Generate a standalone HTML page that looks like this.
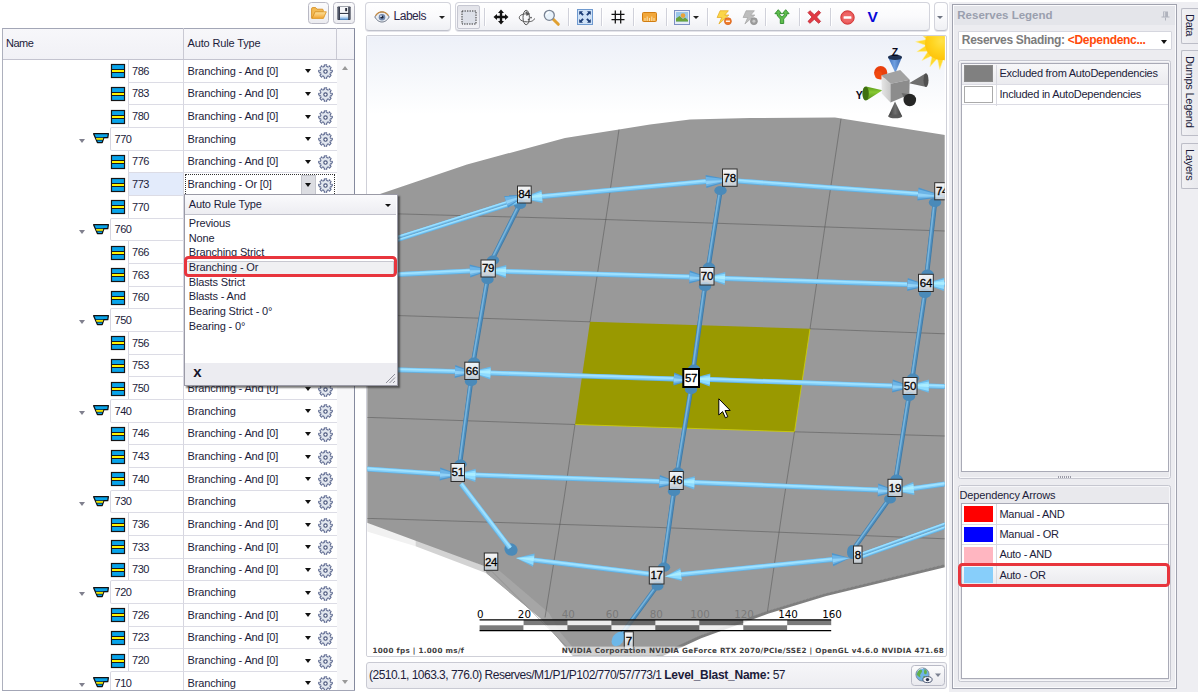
<!DOCTYPE html>
<html lang="en"><head><meta charset="utf-8"><title>Reserves</title>
<style>
*,*:before,*:after{box-sizing:border-box;margin:0;padding:0}
html,body{width:1200px;height:693px;overflow:hidden;background:#fff}
body{position:relative;font-family:"Liberation Sans",sans-serif;font-size:11px;color:#1c1c3a}
.t{position:absolute;white-space:nowrap;line-height:13px;font-size:11px;letter-spacing:-0.15px;color:#1c1c3a}
.t.b{font-weight:bold}
.ic{position:absolute;overflow:visible}
.vl{position:absolute;width:1px}
.tri{position:absolute;width:0;height:0;border-style:solid}
/* tree */
#tree{position:absolute;left:0;top:0;width:360px;height:693px}
#tree:before{content:"";position:absolute;left:2px;top:28px;width:353px;height:663px;border:1px solid #a3a6b6;border-right-color:#858a9e;border-left-color:#adb0bd;background:#fff}
.thead{position:absolute;left:3px;top:29px;width:351px;height:30.9px;background:linear-gradient(#f7f7fa,#f1f1f6);border-bottom:1px solid #c3c3cf}
.sbcol{position:absolute;left:336px;top:60px;width:18px;height:630px;background:#f7f7f9;border-left:1px solid #d4d4dc}
.cell{position:absolute;border-left:1px solid #d6d6e0;border-bottom:1px solid #dcdce5;background:#fff}
.cell.selc{background:#e3ebfb}
.cell.gc{border-top:1px solid #dcdce5;border-radius:2px 0 0 2px}
.focus{position:absolute;border:1px dotted #333}
.ddbtn{position:absolute;background:#dcdde2;border:1px solid #c4c5cc}
/* popup */
#pop{position:absolute;left:184px;top:194px;width:213.5px;height:192px;background:#fff;border:1px solid #9a9aa6;box-shadow:2px 2px 1.5px rgba(40,40,40,.6)}
.pophd{position:absolute;left:0;top:0;width:211px;height:20px;background:linear-gradient(#fafafc,#ededf2);border-bottom:1px solid #c2c2cc}
.popft{position:absolute;left:0;top:168px;width:211.5px;height:22px;background:#ececf1}
.hl{position:absolute;background:#f0f0f2;border:1px solid #c8c8d0}
.redbox{position:absolute;border:3px solid #e8353d;border-radius:4.5px}
/* toolbars */
.sbtn{position:absolute;border:1px solid #b9b9c4;border-radius:3.5px;background:linear-gradient(#fbfbfc,#ececf0)}
.tbar{position:absolute;border:1px solid #d3d4dc;border-bottom-color:#bfc1cb;border-radius:4px;background:linear-gradient(#ffffff 0%,#fafafc 50%,#eff0f4 100%);box-shadow:0 1px 0 #e4e4ea}
.tsep{position:absolute;top:8px;width:1px;height:18px;background:#d0d1da;box-shadow:1px 0 0 #fff}
.tchk{position:absolute;border:1px solid #c6c7d1;border-radius:2px;background:linear-gradient(#e2e3e9,#f2f2f6)}
/* viewport */
#vframe{position:absolute;left:366px;top:35px;width:581px;height:622px;border:1px solid #cfd0d8;border-radius:2px;background:#fff}
#view{position:absolute;left:0;top:0}
.lbl{font:11.5px "Liberation Sans",sans-serif;fill:#000;stroke:#000;stroke-width:0.3px;letter-spacing:-0.2px}
.sc{font:10.3px "DejaVu Sans","Liberation Sans",sans-serif}
.tiny{font:bold 7.2px "DejaVu Sans","Liberation Sans",sans-serif;fill:#404040;letter-spacing:0.3px}
.ax{font:bold 10.5px "Liberation Sans",sans-serif;fill:#0a0a1a}
#status{position:absolute;left:366px;top:662px;width:581px;height:27px;border:1px solid #c9cad3;border-radius:3px;background:linear-gradient(#f6f6f9,#ededf1)}
#status .t{font-size:12px;top:6px;left:2px;letter-spacing:-0.52px}
#status .t b{letter-spacing:-0.26px}
.gbtn{position:absolute;left:911px;top:664.5px;width:33.5px;height:21.5px;border:1px solid #b9bac6;border-radius:3.5px;background:linear-gradient(#fcfcfd,#e9e9ee)}
/* right */
#rbg{position:absolute;left:949px;top:2px;width:249px;height:690px;background:#eeeef2}
#rp{position:absolute;left:951.5px;top:4px;width:225.5px;height:685px;border:1px solid #a0a2ae;background:#ececf0;box-shadow:inset 0 0 0 1px #fbfbfd}
.rptitle{position:absolute;left:1px;top:1px;width:221.5px;height:18.5px;background:#e4e5ea}
.combo{position:absolute;left:5px;top:26px;width:214px;height:19px;background:#fff;border:1px solid #d5d6de;border-radius:1px}
.lbox{position:absolute;border:1px solid #c6c7d0;border-radius:2.5px;background:#e9e9ed;box-shadow:inset 0 0 0 1px #f6f6f9}
.linner{position:absolute;left:2px;top:2px;width:208px;height:408.5px;background:#fff;border:1px solid #a9aab6}
/*L2*/.linner2{position:absolute;left:8px;top:498.3px;width:208px;height:175.7px;background:#fff;border:1px solid #a9aab6}
.lrow{position:absolute;border-bottom:1px solid #dcdce4}
.lrow.sel{background:linear-gradient(#f7f7f9,#ebebef)}
.sw{position:absolute;border:1px solid #999}
.dots{position:absolute;width:14px;height:2px;background:repeating-linear-gradient(90deg,#9a9aa6 0 1px,transparent 1px 2px)}
.stab{position:absolute;left:1181px;width:17px;border:1px solid #bcbdc7;border-right:none;border-radius:2px 0 0 2px;background:linear-gradient(90deg,#f1f1f4,#e9e9ed)}
.stab span{position:absolute;left:13.8px;top:5px;white-space:nowrap;font-size:11px;color:#1c1c3a;transform-origin:0 0;transform:rotate(90deg);line-height:13px;letter-spacing:-0.25px}
</style></head>
<body>
<div id="tree">
<div class="thead"></div>
<div class="vl" style="left:183px;top:28px;height:31px;background:#c9c9d3"></div>
<div class="vl" style="left:336px;top:28px;height:31px;background:#c9c9d3"></div>
<div class="t hd" style="left:6px;top:37.2px;letter-spacing:-0.5px">Name</div>
<div class="t hd" style="left:187.5px;top:37.2px">Auto Rule Type</div>
<div class="sbcol"></div>
<div class="tri" style="left:342px;top:65.8px;border-width:0 3.5px 4px 3.5px;border-color:transparent transparent #9a9a9a transparent"></div>
<div class="tri" style="left:342px;top:680px;border-width:4px 3.5px 0 3.5px;border-color:#9a9a9a transparent transparent transparent"></div>
<div class="cell" style="left:127.5px;top:59.90px;width:55.5px;height:22.67px"></div>
<svg class="ic" style="left:111px;top:64.40px" width="14" height="14" viewBox="0 0 14 14"><rect x="0.5" y="0.5" width="13" height="13" fill="#08a4ea" stroke="#151515" stroke-width="1.2"/><rect x="1" y="5" width="12" height="1" fill="#1a1a1a"/><rect x="1" y="6" width="12" height="2" fill="#fff200"/><rect x="1" y="8" width="12" height="1" fill="#1a1a1a"/></svg>
<div class="cell" style="left:183px;top:59.90px;width:153.5px;height:22.67px"></div>
<div class="t" style="left:132px;top:64.50px;letter-spacing:-0.45px">786</div>
<div class="t" style="left:187.5px;top:64.50px">Branching - And [0]</div>
<div class="tri" style="left:304.5px;top:69.40px;border-width:4px 3.5px 0 3.5px;border-color:#111 transparent transparent transparent"></div>
<svg class="ic" style="left:318px;top:64.20px" width="15" height="15" viewBox="0 0 15 15"><path d="M6.15 2.58L6.36 0.80L8.64 0.80L8.85 2.58L10.03 3.07L11.43 1.95L13.05 3.57L11.93 4.97L12.42 6.15L14.20 6.36L14.20 8.64L12.42 8.85L11.93 10.03L13.05 11.43L11.43 13.05L10.03 11.93L8.85 12.42L8.64 14.20L6.36 14.20L6.15 12.42L4.97 11.93L3.57 13.05L1.95 11.43L3.07 10.03L2.58 8.85L0.80 8.64L0.80 6.36L2.58 6.15L3.07 4.97L1.95 3.57L3.57 1.95L4.97 3.07Z" fill="#e2e7ef" stroke="#56628a" stroke-width="1.15" stroke-linejoin="round" stroke-dasharray="2.2 0.45"/><circle cx="7.5" cy="7.5" r="1.7" fill="#fff" stroke="#4a567c" stroke-width="1.15"/></svg>
<div class="cell" style="left:127.5px;top:82.57px;width:55.5px;height:22.67px"></div>
<svg class="ic" style="left:111px;top:87.07px" width="14" height="14" viewBox="0 0 14 14"><rect x="0.5" y="0.5" width="13" height="13" fill="#08a4ea" stroke="#151515" stroke-width="1.2"/><rect x="1" y="5" width="12" height="1" fill="#1a1a1a"/><rect x="1" y="6" width="12" height="2" fill="#fff200"/><rect x="1" y="8" width="12" height="1" fill="#1a1a1a"/></svg>
<div class="cell" style="left:183px;top:82.57px;width:153.5px;height:22.67px"></div>
<div class="t" style="left:132px;top:87.17px;letter-spacing:-0.45px">783</div>
<div class="t" style="left:187.5px;top:87.17px">Branching - And [0]</div>
<div class="tri" style="left:304.5px;top:92.07px;border-width:4px 3.5px 0 3.5px;border-color:#111 transparent transparent transparent"></div>
<svg class="ic" style="left:318px;top:86.87px" width="15" height="15" viewBox="0 0 15 15"><path d="M6.15 2.58L6.36 0.80L8.64 0.80L8.85 2.58L10.03 3.07L11.43 1.95L13.05 3.57L11.93 4.97L12.42 6.15L14.20 6.36L14.20 8.64L12.42 8.85L11.93 10.03L13.05 11.43L11.43 13.05L10.03 11.93L8.85 12.42L8.64 14.20L6.36 14.20L6.15 12.42L4.97 11.93L3.57 13.05L1.95 11.43L3.07 10.03L2.58 8.85L0.80 8.64L0.80 6.36L2.58 6.15L3.07 4.97L1.95 3.57L3.57 1.95L4.97 3.07Z" fill="#e2e7ef" stroke="#56628a" stroke-width="1.15" stroke-linejoin="round" stroke-dasharray="2.2 0.45"/><circle cx="7.5" cy="7.5" r="1.7" fill="#fff" stroke="#4a567c" stroke-width="1.15"/></svg>
<div class="cell" style="left:127.5px;top:105.23px;width:55.5px;height:22.67px"></div>
<svg class="ic" style="left:111px;top:109.73px" width="14" height="14" viewBox="0 0 14 14"><rect x="0.5" y="0.5" width="13" height="13" fill="#08a4ea" stroke="#151515" stroke-width="1.2"/><rect x="1" y="5" width="12" height="1" fill="#1a1a1a"/><rect x="1" y="6" width="12" height="2" fill="#fff200"/><rect x="1" y="8" width="12" height="1" fill="#1a1a1a"/></svg>
<div class="cell" style="left:183px;top:105.23px;width:153.5px;height:22.67px"></div>
<div class="t" style="left:132px;top:109.83px;letter-spacing:-0.45px">780</div>
<div class="t" style="left:187.5px;top:109.83px">Branching - And [0]</div>
<div class="tri" style="left:304.5px;top:114.73px;border-width:4px 3.5px 0 3.5px;border-color:#111 transparent transparent transparent"></div>
<svg class="ic" style="left:318px;top:109.53px" width="15" height="15" viewBox="0 0 15 15"><path d="M6.15 2.58L6.36 0.80L8.64 0.80L8.85 2.58L10.03 3.07L11.43 1.95L13.05 3.57L11.93 4.97L12.42 6.15L14.20 6.36L14.20 8.64L12.42 8.85L11.93 10.03L13.05 11.43L11.43 13.05L10.03 11.93L8.85 12.42L8.64 14.20L6.36 14.20L6.15 12.42L4.97 11.93L3.57 13.05L1.95 11.43L3.07 10.03L2.58 8.85L0.80 8.64L0.80 6.36L2.58 6.15L3.07 4.97L1.95 3.57L3.57 1.95L4.97 3.07Z" fill="#e2e7ef" stroke="#56628a" stroke-width="1.15" stroke-linejoin="round" stroke-dasharray="2.2 0.45"/><circle cx="7.5" cy="7.5" r="1.7" fill="#fff" stroke="#4a567c" stroke-width="1.15"/></svg>
<div class="cell gc" style="left:110px;top:126.90px;width:73px;height:23.67px"></div>
<div class="tri" style="left:79px;top:138.90px;border-width:4px 3.4px 0 3.4px;border-color:#80808e transparent transparent transparent"></div>
<svg class="ic" style="left:92.6px;top:133.40px" width="16" height="11" viewBox="0 0 16 11"><path d="M0.6 0.7H15.4L14.8 4.6H10.9L9.2 9.5H4.4Z" fill="#08a4ea" stroke="#111" stroke-width="1.25" stroke-linejoin="round"/><path d="M2.9 4.9H10.3L9.6 7H3.8Z" fill="#fff200"/><path d="M2.4 4.6H14M3.7 7.2H9.8" stroke="#111" stroke-width="0.7" fill="none"/></svg>
<div class="cell" style="left:183px;top:127.90px;width:153.5px;height:22.67px"></div>
<div class="t" style="left:114.5px;top:132.50px;letter-spacing:-0.45px">770</div>
<div class="t" style="left:187.5px;top:132.50px">Branching</div>
<div class="tri" style="left:304.5px;top:137.40px;border-width:4px 3.5px 0 3.5px;border-color:#111 transparent transparent transparent"></div>
<svg class="ic" style="left:318px;top:132.20px" width="15" height="15" viewBox="0 0 15 15"><path d="M6.15 2.58L6.36 0.80L8.64 0.80L8.85 2.58L10.03 3.07L11.43 1.95L13.05 3.57L11.93 4.97L12.42 6.15L14.20 6.36L14.20 8.64L12.42 8.85L11.93 10.03L13.05 11.43L11.43 13.05L10.03 11.93L8.85 12.42L8.64 14.20L6.36 14.20L6.15 12.42L4.97 11.93L3.57 13.05L1.95 11.43L3.07 10.03L2.58 8.85L0.80 8.64L0.80 6.36L2.58 6.15L3.07 4.97L1.95 3.57L3.57 1.95L4.97 3.07Z" fill="#e2e7ef" stroke="#56628a" stroke-width="1.15" stroke-linejoin="round" stroke-dasharray="2.2 0.45"/><circle cx="7.5" cy="7.5" r="1.7" fill="#fff" stroke="#4a567c" stroke-width="1.15"/></svg>
<div class="cell" style="left:127.5px;top:150.57px;width:55.5px;height:22.67px"></div>
<svg class="ic" style="left:111px;top:155.07px" width="14" height="14" viewBox="0 0 14 14"><rect x="0.5" y="0.5" width="13" height="13" fill="#08a4ea" stroke="#151515" stroke-width="1.2"/><rect x="1" y="5" width="12" height="1" fill="#1a1a1a"/><rect x="1" y="6" width="12" height="2" fill="#fff200"/><rect x="1" y="8" width="12" height="1" fill="#1a1a1a"/></svg>
<div class="cell" style="left:183px;top:150.57px;width:153.5px;height:22.67px"></div>
<div class="t" style="left:132px;top:155.17px;letter-spacing:-0.45px">776</div>
<div class="t" style="left:187.5px;top:155.17px">Branching - And [0]</div>
<div class="tri" style="left:304.5px;top:160.07px;border-width:4px 3.5px 0 3.5px;border-color:#111 transparent transparent transparent"></div>
<svg class="ic" style="left:318px;top:154.87px" width="15" height="15" viewBox="0 0 15 15"><path d="M6.15 2.58L6.36 0.80L8.64 0.80L8.85 2.58L10.03 3.07L11.43 1.95L13.05 3.57L11.93 4.97L12.42 6.15L14.20 6.36L14.20 8.64L12.42 8.85L11.93 10.03L13.05 11.43L11.43 13.05L10.03 11.93L8.85 12.42L8.64 14.20L6.36 14.20L6.15 12.42L4.97 11.93L3.57 13.05L1.95 11.43L3.07 10.03L2.58 8.85L0.80 8.64L0.80 6.36L2.58 6.15L3.07 4.97L1.95 3.57L3.57 1.95L4.97 3.07Z" fill="#e2e7ef" stroke="#56628a" stroke-width="1.15" stroke-linejoin="round" stroke-dasharray="2.2 0.45"/><circle cx="7.5" cy="7.5" r="1.7" fill="#fff" stroke="#4a567c" stroke-width="1.15"/></svg>
<div class="cell selc" style="left:127.5px;top:173.24px;width:55.5px;height:22.67px"></div>
<svg class="ic" style="left:111px;top:177.74px" width="14" height="14" viewBox="0 0 14 14"><rect x="0.5" y="0.5" width="13" height="13" fill="#08a4ea" stroke="#151515" stroke-width="1.2"/><rect x="1" y="5" width="12" height="1" fill="#1a1a1a"/><rect x="1" y="6" width="12" height="2" fill="#fff200"/><rect x="1" y="8" width="12" height="1" fill="#1a1a1a"/></svg>
<div class="cell" style="left:183px;top:173.24px;width:153.5px;height:22.67px"></div>
<div class="t" style="left:132px;top:177.84px;letter-spacing:-0.45px">773</div>
<div class="t" style="left:187.5px;top:177.84px">Branching - Or [0]</div>
<div class="focus" style="left:184.5px;top:174.24px;width:150px;height:21.67px"></div>
<div class="ddbtn" style="left:300.5px;top:174.74px;width:15px;height:20.17px"></div>
<div class="tri" style="left:304.5px;top:182.74px;border-width:4px 3.5px 0 3.5px;border-color:#111 transparent transparent transparent"></div>
<svg class="ic" style="left:318px;top:177.54px" width="15" height="15" viewBox="0 0 15 15"><path d="M6.15 2.58L6.36 0.80L8.64 0.80L8.85 2.58L10.03 3.07L11.43 1.95L13.05 3.57L11.93 4.97L12.42 6.15L14.20 6.36L14.20 8.64L12.42 8.85L11.93 10.03L13.05 11.43L11.43 13.05L10.03 11.93L8.85 12.42L8.64 14.20L6.36 14.20L6.15 12.42L4.97 11.93L3.57 13.05L1.95 11.43L3.07 10.03L2.58 8.85L0.80 8.64L0.80 6.36L2.58 6.15L3.07 4.97L1.95 3.57L3.57 1.95L4.97 3.07Z" fill="#e2e7ef" stroke="#56628a" stroke-width="1.15" stroke-linejoin="round" stroke-dasharray="2.2 0.45"/><circle cx="7.5" cy="7.5" r="1.7" fill="#fff" stroke="#4a567c" stroke-width="1.15"/></svg>
<div class="cell" style="left:127.5px;top:195.90px;width:55.5px;height:22.67px"></div>
<svg class="ic" style="left:111px;top:200.40px" width="14" height="14" viewBox="0 0 14 14"><rect x="0.5" y="0.5" width="13" height="13" fill="#08a4ea" stroke="#151515" stroke-width="1.2"/><rect x="1" y="5" width="12" height="1" fill="#1a1a1a"/><rect x="1" y="6" width="12" height="2" fill="#fff200"/><rect x="1" y="8" width="12" height="1" fill="#1a1a1a"/></svg>
<div class="cell" style="left:183px;top:195.90px;width:153.5px;height:22.67px"></div>
<div class="t" style="left:132px;top:200.50px;letter-spacing:-0.45px">770</div>
<div class="t" style="left:187.5px;top:200.50px">Branching - And [0]</div>
<div class="tri" style="left:304.5px;top:205.40px;border-width:4px 3.5px 0 3.5px;border-color:#111 transparent transparent transparent"></div>
<svg class="ic" style="left:318px;top:200.20px" width="15" height="15" viewBox="0 0 15 15"><path d="M6.15 2.58L6.36 0.80L8.64 0.80L8.85 2.58L10.03 3.07L11.43 1.95L13.05 3.57L11.93 4.97L12.42 6.15L14.20 6.36L14.20 8.64L12.42 8.85L11.93 10.03L13.05 11.43L11.43 13.05L10.03 11.93L8.85 12.42L8.64 14.20L6.36 14.20L6.15 12.42L4.97 11.93L3.57 13.05L1.95 11.43L3.07 10.03L2.58 8.85L0.80 8.64L0.80 6.36L2.58 6.15L3.07 4.97L1.95 3.57L3.57 1.95L4.97 3.07Z" fill="#e2e7ef" stroke="#56628a" stroke-width="1.15" stroke-linejoin="round" stroke-dasharray="2.2 0.45"/><circle cx="7.5" cy="7.5" r="1.7" fill="#fff" stroke="#4a567c" stroke-width="1.15"/></svg>
<div class="cell gc" style="left:110px;top:217.57px;width:73px;height:23.67px"></div>
<div class="tri" style="left:79px;top:229.57px;border-width:4px 3.4px 0 3.4px;border-color:#80808e transparent transparent transparent"></div>
<svg class="ic" style="left:92.6px;top:224.07px" width="16" height="11" viewBox="0 0 16 11"><path d="M0.6 0.7H15.4L14.8 4.6H10.9L9.2 9.5H4.4Z" fill="#08a4ea" stroke="#111" stroke-width="1.25" stroke-linejoin="round"/><path d="M2.9 4.9H10.3L9.6 7H3.8Z" fill="#fff200"/><path d="M2.4 4.6H14M3.7 7.2H9.8" stroke="#111" stroke-width="0.7" fill="none"/></svg>
<div class="cell" style="left:183px;top:218.57px;width:153.5px;height:22.67px"></div>
<div class="t" style="left:114.5px;top:223.17px;letter-spacing:-0.45px">760</div>
<div class="t" style="left:187.5px;top:223.17px">Branching</div>
<div class="tri" style="left:304.5px;top:228.07px;border-width:4px 3.5px 0 3.5px;border-color:#111 transparent transparent transparent"></div>
<svg class="ic" style="left:318px;top:222.87px" width="15" height="15" viewBox="0 0 15 15"><path d="M6.15 2.58L6.36 0.80L8.64 0.80L8.85 2.58L10.03 3.07L11.43 1.95L13.05 3.57L11.93 4.97L12.42 6.15L14.20 6.36L14.20 8.64L12.42 8.85L11.93 10.03L13.05 11.43L11.43 13.05L10.03 11.93L8.85 12.42L8.64 14.20L6.36 14.20L6.15 12.42L4.97 11.93L3.57 13.05L1.95 11.43L3.07 10.03L2.58 8.85L0.80 8.64L0.80 6.36L2.58 6.15L3.07 4.97L1.95 3.57L3.57 1.95L4.97 3.07Z" fill="#e2e7ef" stroke="#56628a" stroke-width="1.15" stroke-linejoin="round" stroke-dasharray="2.2 0.45"/><circle cx="7.5" cy="7.5" r="1.7" fill="#fff" stroke="#4a567c" stroke-width="1.15"/></svg>
<div class="cell" style="left:127.5px;top:241.24px;width:55.5px;height:22.67px"></div>
<svg class="ic" style="left:111px;top:245.74px" width="14" height="14" viewBox="0 0 14 14"><rect x="0.5" y="0.5" width="13" height="13" fill="#08a4ea" stroke="#151515" stroke-width="1.2"/><rect x="1" y="5" width="12" height="1" fill="#1a1a1a"/><rect x="1" y="6" width="12" height="2" fill="#fff200"/><rect x="1" y="8" width="12" height="1" fill="#1a1a1a"/></svg>
<div class="cell" style="left:183px;top:241.24px;width:153.5px;height:22.67px"></div>
<div class="t" style="left:132px;top:245.84px;letter-spacing:-0.45px">766</div>
<div class="t" style="left:187.5px;top:245.84px">Branching - And [0]</div>
<div class="tri" style="left:304.5px;top:250.74px;border-width:4px 3.5px 0 3.5px;border-color:#111 transparent transparent transparent"></div>
<svg class="ic" style="left:318px;top:245.54px" width="15" height="15" viewBox="0 0 15 15"><path d="M6.15 2.58L6.36 0.80L8.64 0.80L8.85 2.58L10.03 3.07L11.43 1.95L13.05 3.57L11.93 4.97L12.42 6.15L14.20 6.36L14.20 8.64L12.42 8.85L11.93 10.03L13.05 11.43L11.43 13.05L10.03 11.93L8.85 12.42L8.64 14.20L6.36 14.20L6.15 12.42L4.97 11.93L3.57 13.05L1.95 11.43L3.07 10.03L2.58 8.85L0.80 8.64L0.80 6.36L2.58 6.15L3.07 4.97L1.95 3.57L3.57 1.95L4.97 3.07Z" fill="#e2e7ef" stroke="#56628a" stroke-width="1.15" stroke-linejoin="round" stroke-dasharray="2.2 0.45"/><circle cx="7.5" cy="7.5" r="1.7" fill="#fff" stroke="#4a567c" stroke-width="1.15"/></svg>
<div class="cell" style="left:127.5px;top:263.90px;width:55.5px;height:22.67px"></div>
<svg class="ic" style="left:111px;top:268.40px" width="14" height="14" viewBox="0 0 14 14"><rect x="0.5" y="0.5" width="13" height="13" fill="#08a4ea" stroke="#151515" stroke-width="1.2"/><rect x="1" y="5" width="12" height="1" fill="#1a1a1a"/><rect x="1" y="6" width="12" height="2" fill="#fff200"/><rect x="1" y="8" width="12" height="1" fill="#1a1a1a"/></svg>
<div class="cell" style="left:183px;top:263.90px;width:153.5px;height:22.67px"></div>
<div class="t" style="left:132px;top:268.50px;letter-spacing:-0.45px">763</div>
<div class="t" style="left:187.5px;top:268.50px">Branching - And [0]</div>
<div class="tri" style="left:304.5px;top:273.40px;border-width:4px 3.5px 0 3.5px;border-color:#111 transparent transparent transparent"></div>
<svg class="ic" style="left:318px;top:268.20px" width="15" height="15" viewBox="0 0 15 15"><path d="M6.15 2.58L6.36 0.80L8.64 0.80L8.85 2.58L10.03 3.07L11.43 1.95L13.05 3.57L11.93 4.97L12.42 6.15L14.20 6.36L14.20 8.64L12.42 8.85L11.93 10.03L13.05 11.43L11.43 13.05L10.03 11.93L8.85 12.42L8.64 14.20L6.36 14.20L6.15 12.42L4.97 11.93L3.57 13.05L1.95 11.43L3.07 10.03L2.58 8.85L0.80 8.64L0.80 6.36L2.58 6.15L3.07 4.97L1.95 3.57L3.57 1.95L4.97 3.07Z" fill="#e2e7ef" stroke="#56628a" stroke-width="1.15" stroke-linejoin="round" stroke-dasharray="2.2 0.45"/><circle cx="7.5" cy="7.5" r="1.7" fill="#fff" stroke="#4a567c" stroke-width="1.15"/></svg>
<div class="cell" style="left:127.5px;top:286.57px;width:55.5px;height:22.67px"></div>
<svg class="ic" style="left:111px;top:291.07px" width="14" height="14" viewBox="0 0 14 14"><rect x="0.5" y="0.5" width="13" height="13" fill="#08a4ea" stroke="#151515" stroke-width="1.2"/><rect x="1" y="5" width="12" height="1" fill="#1a1a1a"/><rect x="1" y="6" width="12" height="2" fill="#fff200"/><rect x="1" y="8" width="12" height="1" fill="#1a1a1a"/></svg>
<div class="cell" style="left:183px;top:286.57px;width:153.5px;height:22.67px"></div>
<div class="t" style="left:132px;top:291.17px;letter-spacing:-0.45px">760</div>
<div class="t" style="left:187.5px;top:291.17px">Branching - And [0]</div>
<div class="tri" style="left:304.5px;top:296.07px;border-width:4px 3.5px 0 3.5px;border-color:#111 transparent transparent transparent"></div>
<svg class="ic" style="left:318px;top:290.87px" width="15" height="15" viewBox="0 0 15 15"><path d="M6.15 2.58L6.36 0.80L8.64 0.80L8.85 2.58L10.03 3.07L11.43 1.95L13.05 3.57L11.93 4.97L12.42 6.15L14.20 6.36L14.20 8.64L12.42 8.85L11.93 10.03L13.05 11.43L11.43 13.05L10.03 11.93L8.85 12.42L8.64 14.20L6.36 14.20L6.15 12.42L4.97 11.93L3.57 13.05L1.95 11.43L3.07 10.03L2.58 8.85L0.80 8.64L0.80 6.36L2.58 6.15L3.07 4.97L1.95 3.57L3.57 1.95L4.97 3.07Z" fill="#e2e7ef" stroke="#56628a" stroke-width="1.15" stroke-linejoin="round" stroke-dasharray="2.2 0.45"/><circle cx="7.5" cy="7.5" r="1.7" fill="#fff" stroke="#4a567c" stroke-width="1.15"/></svg>
<div class="cell gc" style="left:110px;top:308.24px;width:73px;height:23.67px"></div>
<div class="tri" style="left:79px;top:320.24px;border-width:4px 3.4px 0 3.4px;border-color:#80808e transparent transparent transparent"></div>
<svg class="ic" style="left:92.6px;top:314.74px" width="16" height="11" viewBox="0 0 16 11"><path d="M0.6 0.7H15.4L14.8 4.6H10.9L9.2 9.5H4.4Z" fill="#08a4ea" stroke="#111" stroke-width="1.25" stroke-linejoin="round"/><path d="M2.9 4.9H10.3L9.6 7H3.8Z" fill="#fff200"/><path d="M2.4 4.6H14M3.7 7.2H9.8" stroke="#111" stroke-width="0.7" fill="none"/></svg>
<div class="cell" style="left:183px;top:309.24px;width:153.5px;height:22.67px"></div>
<div class="t" style="left:114.5px;top:313.84px;letter-spacing:-0.45px">750</div>
<div class="t" style="left:187.5px;top:313.84px">Branching</div>
<div class="tri" style="left:304.5px;top:318.74px;border-width:4px 3.5px 0 3.5px;border-color:#111 transparent transparent transparent"></div>
<svg class="ic" style="left:318px;top:313.54px" width="15" height="15" viewBox="0 0 15 15"><path d="M6.15 2.58L6.36 0.80L8.64 0.80L8.85 2.58L10.03 3.07L11.43 1.95L13.05 3.57L11.93 4.97L12.42 6.15L14.20 6.36L14.20 8.64L12.42 8.85L11.93 10.03L13.05 11.43L11.43 13.05L10.03 11.93L8.85 12.42L8.64 14.20L6.36 14.20L6.15 12.42L4.97 11.93L3.57 13.05L1.95 11.43L3.07 10.03L2.58 8.85L0.80 8.64L0.80 6.36L2.58 6.15L3.07 4.97L1.95 3.57L3.57 1.95L4.97 3.07Z" fill="#e2e7ef" stroke="#56628a" stroke-width="1.15" stroke-linejoin="round" stroke-dasharray="2.2 0.45"/><circle cx="7.5" cy="7.5" r="1.7" fill="#fff" stroke="#4a567c" stroke-width="1.15"/></svg>
<div class="cell" style="left:127.5px;top:331.90px;width:55.5px;height:22.67px"></div>
<svg class="ic" style="left:111px;top:336.40px" width="14" height="14" viewBox="0 0 14 14"><rect x="0.5" y="0.5" width="13" height="13" fill="#08a4ea" stroke="#151515" stroke-width="1.2"/><rect x="1" y="5" width="12" height="1" fill="#1a1a1a"/><rect x="1" y="6" width="12" height="2" fill="#fff200"/><rect x="1" y="8" width="12" height="1" fill="#1a1a1a"/></svg>
<div class="cell" style="left:183px;top:331.90px;width:153.5px;height:22.67px"></div>
<div class="t" style="left:132px;top:336.50px;letter-spacing:-0.45px">756</div>
<div class="t" style="left:187.5px;top:336.50px">Branching - And [0]</div>
<div class="tri" style="left:304.5px;top:341.40px;border-width:4px 3.5px 0 3.5px;border-color:#111 transparent transparent transparent"></div>
<svg class="ic" style="left:318px;top:336.20px" width="15" height="15" viewBox="0 0 15 15"><path d="M6.15 2.58L6.36 0.80L8.64 0.80L8.85 2.58L10.03 3.07L11.43 1.95L13.05 3.57L11.93 4.97L12.42 6.15L14.20 6.36L14.20 8.64L12.42 8.85L11.93 10.03L13.05 11.43L11.43 13.05L10.03 11.93L8.85 12.42L8.64 14.20L6.36 14.20L6.15 12.42L4.97 11.93L3.57 13.05L1.95 11.43L3.07 10.03L2.58 8.85L0.80 8.64L0.80 6.36L2.58 6.15L3.07 4.97L1.95 3.57L3.57 1.95L4.97 3.07Z" fill="#e2e7ef" stroke="#56628a" stroke-width="1.15" stroke-linejoin="round" stroke-dasharray="2.2 0.45"/><circle cx="7.5" cy="7.5" r="1.7" fill="#fff" stroke="#4a567c" stroke-width="1.15"/></svg>
<div class="cell" style="left:127.5px;top:354.57px;width:55.5px;height:22.67px"></div>
<svg class="ic" style="left:111px;top:359.07px" width="14" height="14" viewBox="0 0 14 14"><rect x="0.5" y="0.5" width="13" height="13" fill="#08a4ea" stroke="#151515" stroke-width="1.2"/><rect x="1" y="5" width="12" height="1" fill="#1a1a1a"/><rect x="1" y="6" width="12" height="2" fill="#fff200"/><rect x="1" y="8" width="12" height="1" fill="#1a1a1a"/></svg>
<div class="cell" style="left:183px;top:354.57px;width:153.5px;height:22.67px"></div>
<div class="t" style="left:132px;top:359.17px;letter-spacing:-0.45px">753</div>
<div class="t" style="left:187.5px;top:359.17px">Branching - And [0]</div>
<div class="tri" style="left:304.5px;top:364.07px;border-width:4px 3.5px 0 3.5px;border-color:#111 transparent transparent transparent"></div>
<svg class="ic" style="left:318px;top:358.87px" width="15" height="15" viewBox="0 0 15 15"><path d="M6.15 2.58L6.36 0.80L8.64 0.80L8.85 2.58L10.03 3.07L11.43 1.95L13.05 3.57L11.93 4.97L12.42 6.15L14.20 6.36L14.20 8.64L12.42 8.85L11.93 10.03L13.05 11.43L11.43 13.05L10.03 11.93L8.85 12.42L8.64 14.20L6.36 14.20L6.15 12.42L4.97 11.93L3.57 13.05L1.95 11.43L3.07 10.03L2.58 8.85L0.80 8.64L0.80 6.36L2.58 6.15L3.07 4.97L1.95 3.57L3.57 1.95L4.97 3.07Z" fill="#e2e7ef" stroke="#56628a" stroke-width="1.15" stroke-linejoin="round" stroke-dasharray="2.2 0.45"/><circle cx="7.5" cy="7.5" r="1.7" fill="#fff" stroke="#4a567c" stroke-width="1.15"/></svg>
<div class="cell" style="left:127.5px;top:377.24px;width:55.5px;height:22.67px"></div>
<svg class="ic" style="left:111px;top:381.74px" width="14" height="14" viewBox="0 0 14 14"><rect x="0.5" y="0.5" width="13" height="13" fill="#08a4ea" stroke="#151515" stroke-width="1.2"/><rect x="1" y="5" width="12" height="1" fill="#1a1a1a"/><rect x="1" y="6" width="12" height="2" fill="#fff200"/><rect x="1" y="8" width="12" height="1" fill="#1a1a1a"/></svg>
<div class="cell" style="left:183px;top:377.24px;width:153.5px;height:22.67px"></div>
<div class="t" style="left:132px;top:381.84px;letter-spacing:-0.45px">750</div>
<div class="t" style="left:187.5px;top:381.84px">Branching - And [0]</div>
<div class="tri" style="left:304.5px;top:386.74px;border-width:4px 3.5px 0 3.5px;border-color:#111 transparent transparent transparent"></div>
<svg class="ic" style="left:318px;top:381.54px" width="15" height="15" viewBox="0 0 15 15"><path d="M6.15 2.58L6.36 0.80L8.64 0.80L8.85 2.58L10.03 3.07L11.43 1.95L13.05 3.57L11.93 4.97L12.42 6.15L14.20 6.36L14.20 8.64L12.42 8.85L11.93 10.03L13.05 11.43L11.43 13.05L10.03 11.93L8.85 12.42L8.64 14.20L6.36 14.20L6.15 12.42L4.97 11.93L3.57 13.05L1.95 11.43L3.07 10.03L2.58 8.85L0.80 8.64L0.80 6.36L2.58 6.15L3.07 4.97L1.95 3.57L3.57 1.95L4.97 3.07Z" fill="#e2e7ef" stroke="#56628a" stroke-width="1.15" stroke-linejoin="round" stroke-dasharray="2.2 0.45"/><circle cx="7.5" cy="7.5" r="1.7" fill="#fff" stroke="#4a567c" stroke-width="1.15"/></svg>
<div class="cell gc" style="left:110px;top:398.90px;width:73px;height:23.67px"></div>
<div class="tri" style="left:79px;top:410.90px;border-width:4px 3.4px 0 3.4px;border-color:#80808e transparent transparent transparent"></div>
<svg class="ic" style="left:92.6px;top:405.40px" width="16" height="11" viewBox="0 0 16 11"><path d="M0.6 0.7H15.4L14.8 4.6H10.9L9.2 9.5H4.4Z" fill="#08a4ea" stroke="#111" stroke-width="1.25" stroke-linejoin="round"/><path d="M2.9 4.9H10.3L9.6 7H3.8Z" fill="#fff200"/><path d="M2.4 4.6H14M3.7 7.2H9.8" stroke="#111" stroke-width="0.7" fill="none"/></svg>
<div class="cell" style="left:183px;top:399.90px;width:153.5px;height:22.67px"></div>
<div class="t" style="left:114.5px;top:404.50px;letter-spacing:-0.45px">740</div>
<div class="t" style="left:187.5px;top:404.50px">Branching</div>
<div class="tri" style="left:304.5px;top:409.40px;border-width:4px 3.5px 0 3.5px;border-color:#111 transparent transparent transparent"></div>
<svg class="ic" style="left:318px;top:404.20px" width="15" height="15" viewBox="0 0 15 15"><path d="M6.15 2.58L6.36 0.80L8.64 0.80L8.85 2.58L10.03 3.07L11.43 1.95L13.05 3.57L11.93 4.97L12.42 6.15L14.20 6.36L14.20 8.64L12.42 8.85L11.93 10.03L13.05 11.43L11.43 13.05L10.03 11.93L8.85 12.42L8.64 14.20L6.36 14.20L6.15 12.42L4.97 11.93L3.57 13.05L1.95 11.43L3.07 10.03L2.58 8.85L0.80 8.64L0.80 6.36L2.58 6.15L3.07 4.97L1.95 3.57L3.57 1.95L4.97 3.07Z" fill="#e2e7ef" stroke="#56628a" stroke-width="1.15" stroke-linejoin="round" stroke-dasharray="2.2 0.45"/><circle cx="7.5" cy="7.5" r="1.7" fill="#fff" stroke="#4a567c" stroke-width="1.15"/></svg>
<div class="cell" style="left:127.5px;top:422.57px;width:55.5px;height:22.67px"></div>
<svg class="ic" style="left:111px;top:427.07px" width="14" height="14" viewBox="0 0 14 14"><rect x="0.5" y="0.5" width="13" height="13" fill="#08a4ea" stroke="#151515" stroke-width="1.2"/><rect x="1" y="5" width="12" height="1" fill="#1a1a1a"/><rect x="1" y="6" width="12" height="2" fill="#fff200"/><rect x="1" y="8" width="12" height="1" fill="#1a1a1a"/></svg>
<div class="cell" style="left:183px;top:422.57px;width:153.5px;height:22.67px"></div>
<div class="t" style="left:132px;top:427.17px;letter-spacing:-0.45px">746</div>
<div class="t" style="left:187.5px;top:427.17px">Branching - And [0]</div>
<div class="tri" style="left:304.5px;top:432.07px;border-width:4px 3.5px 0 3.5px;border-color:#111 transparent transparent transparent"></div>
<svg class="ic" style="left:318px;top:426.87px" width="15" height="15" viewBox="0 0 15 15"><path d="M6.15 2.58L6.36 0.80L8.64 0.80L8.85 2.58L10.03 3.07L11.43 1.95L13.05 3.57L11.93 4.97L12.42 6.15L14.20 6.36L14.20 8.64L12.42 8.85L11.93 10.03L13.05 11.43L11.43 13.05L10.03 11.93L8.85 12.42L8.64 14.20L6.36 14.20L6.15 12.42L4.97 11.93L3.57 13.05L1.95 11.43L3.07 10.03L2.58 8.85L0.80 8.64L0.80 6.36L2.58 6.15L3.07 4.97L1.95 3.57L3.57 1.95L4.97 3.07Z" fill="#e2e7ef" stroke="#56628a" stroke-width="1.15" stroke-linejoin="round" stroke-dasharray="2.2 0.45"/><circle cx="7.5" cy="7.5" r="1.7" fill="#fff" stroke="#4a567c" stroke-width="1.15"/></svg>
<div class="cell" style="left:127.5px;top:445.24px;width:55.5px;height:22.67px"></div>
<svg class="ic" style="left:111px;top:449.74px" width="14" height="14" viewBox="0 0 14 14"><rect x="0.5" y="0.5" width="13" height="13" fill="#08a4ea" stroke="#151515" stroke-width="1.2"/><rect x="1" y="5" width="12" height="1" fill="#1a1a1a"/><rect x="1" y="6" width="12" height="2" fill="#fff200"/><rect x="1" y="8" width="12" height="1" fill="#1a1a1a"/></svg>
<div class="cell" style="left:183px;top:445.24px;width:153.5px;height:22.67px"></div>
<div class="t" style="left:132px;top:449.84px;letter-spacing:-0.45px">743</div>
<div class="t" style="left:187.5px;top:449.84px">Branching - And [0]</div>
<div class="tri" style="left:304.5px;top:454.74px;border-width:4px 3.5px 0 3.5px;border-color:#111 transparent transparent transparent"></div>
<svg class="ic" style="left:318px;top:449.54px" width="15" height="15" viewBox="0 0 15 15"><path d="M6.15 2.58L6.36 0.80L8.64 0.80L8.85 2.58L10.03 3.07L11.43 1.95L13.05 3.57L11.93 4.97L12.42 6.15L14.20 6.36L14.20 8.64L12.42 8.85L11.93 10.03L13.05 11.43L11.43 13.05L10.03 11.93L8.85 12.42L8.64 14.20L6.36 14.20L6.15 12.42L4.97 11.93L3.57 13.05L1.95 11.43L3.07 10.03L2.58 8.85L0.80 8.64L0.80 6.36L2.58 6.15L3.07 4.97L1.95 3.57L3.57 1.95L4.97 3.07Z" fill="#e2e7ef" stroke="#56628a" stroke-width="1.15" stroke-linejoin="round" stroke-dasharray="2.2 0.45"/><circle cx="7.5" cy="7.5" r="1.7" fill="#fff" stroke="#4a567c" stroke-width="1.15"/></svg>
<div class="cell" style="left:127.5px;top:467.91px;width:55.5px;height:22.67px"></div>
<svg class="ic" style="left:111px;top:472.41px" width="14" height="14" viewBox="0 0 14 14"><rect x="0.5" y="0.5" width="13" height="13" fill="#08a4ea" stroke="#151515" stroke-width="1.2"/><rect x="1" y="5" width="12" height="1" fill="#1a1a1a"/><rect x="1" y="6" width="12" height="2" fill="#fff200"/><rect x="1" y="8" width="12" height="1" fill="#1a1a1a"/></svg>
<div class="cell" style="left:183px;top:467.91px;width:153.5px;height:22.67px"></div>
<div class="t" style="left:132px;top:472.51px;letter-spacing:-0.45px">740</div>
<div class="t" style="left:187.5px;top:472.51px">Branching - And [0]</div>
<div class="tri" style="left:304.5px;top:477.41px;border-width:4px 3.5px 0 3.5px;border-color:#111 transparent transparent transparent"></div>
<svg class="ic" style="left:318px;top:472.21px" width="15" height="15" viewBox="0 0 15 15"><path d="M6.15 2.58L6.36 0.80L8.64 0.80L8.85 2.58L10.03 3.07L11.43 1.95L13.05 3.57L11.93 4.97L12.42 6.15L14.20 6.36L14.20 8.64L12.42 8.85L11.93 10.03L13.05 11.43L11.43 13.05L10.03 11.93L8.85 12.42L8.64 14.20L6.36 14.20L6.15 12.42L4.97 11.93L3.57 13.05L1.95 11.43L3.07 10.03L2.58 8.85L0.80 8.64L0.80 6.36L2.58 6.15L3.07 4.97L1.95 3.57L3.57 1.95L4.97 3.07Z" fill="#e2e7ef" stroke="#56628a" stroke-width="1.15" stroke-linejoin="round" stroke-dasharray="2.2 0.45"/><circle cx="7.5" cy="7.5" r="1.7" fill="#fff" stroke="#4a567c" stroke-width="1.15"/></svg>
<div class="cell gc" style="left:110px;top:489.57px;width:73px;height:23.67px"></div>
<div class="tri" style="left:79px;top:501.57px;border-width:4px 3.4px 0 3.4px;border-color:#80808e transparent transparent transparent"></div>
<svg class="ic" style="left:92.6px;top:496.07px" width="16" height="11" viewBox="0 0 16 11"><path d="M0.6 0.7H15.4L14.8 4.6H10.9L9.2 9.5H4.4Z" fill="#08a4ea" stroke="#111" stroke-width="1.25" stroke-linejoin="round"/><path d="M2.9 4.9H10.3L9.6 7H3.8Z" fill="#fff200"/><path d="M2.4 4.6H14M3.7 7.2H9.8" stroke="#111" stroke-width="0.7" fill="none"/></svg>
<div class="cell" style="left:183px;top:490.57px;width:153.5px;height:22.67px"></div>
<div class="t" style="left:114.5px;top:495.17px;letter-spacing:-0.45px">730</div>
<div class="t" style="left:187.5px;top:495.17px">Branching</div>
<div class="tri" style="left:304.5px;top:500.07px;border-width:4px 3.5px 0 3.5px;border-color:#111 transparent transparent transparent"></div>
<svg class="ic" style="left:318px;top:494.87px" width="15" height="15" viewBox="0 0 15 15"><path d="M6.15 2.58L6.36 0.80L8.64 0.80L8.85 2.58L10.03 3.07L11.43 1.95L13.05 3.57L11.93 4.97L12.42 6.15L14.20 6.36L14.20 8.64L12.42 8.85L11.93 10.03L13.05 11.43L11.43 13.05L10.03 11.93L8.85 12.42L8.64 14.20L6.36 14.20L6.15 12.42L4.97 11.93L3.57 13.05L1.95 11.43L3.07 10.03L2.58 8.85L0.80 8.64L0.80 6.36L2.58 6.15L3.07 4.97L1.95 3.57L3.57 1.95L4.97 3.07Z" fill="#e2e7ef" stroke="#56628a" stroke-width="1.15" stroke-linejoin="round" stroke-dasharray="2.2 0.45"/><circle cx="7.5" cy="7.5" r="1.7" fill="#fff" stroke="#4a567c" stroke-width="1.15"/></svg>
<div class="cell" style="left:127.5px;top:513.24px;width:55.5px;height:22.67px"></div>
<svg class="ic" style="left:111px;top:517.74px" width="14" height="14" viewBox="0 0 14 14"><rect x="0.5" y="0.5" width="13" height="13" fill="#08a4ea" stroke="#151515" stroke-width="1.2"/><rect x="1" y="5" width="12" height="1" fill="#1a1a1a"/><rect x="1" y="6" width="12" height="2" fill="#fff200"/><rect x="1" y="8" width="12" height="1" fill="#1a1a1a"/></svg>
<div class="cell" style="left:183px;top:513.24px;width:153.5px;height:22.67px"></div>
<div class="t" style="left:132px;top:517.84px;letter-spacing:-0.45px">736</div>
<div class="t" style="left:187.5px;top:517.84px">Branching - And [0]</div>
<div class="tri" style="left:304.5px;top:522.74px;border-width:4px 3.5px 0 3.5px;border-color:#111 transparent transparent transparent"></div>
<svg class="ic" style="left:318px;top:517.54px" width="15" height="15" viewBox="0 0 15 15"><path d="M6.15 2.58L6.36 0.80L8.64 0.80L8.85 2.58L10.03 3.07L11.43 1.95L13.05 3.57L11.93 4.97L12.42 6.15L14.20 6.36L14.20 8.64L12.42 8.85L11.93 10.03L13.05 11.43L11.43 13.05L10.03 11.93L8.85 12.42L8.64 14.20L6.36 14.20L6.15 12.42L4.97 11.93L3.57 13.05L1.95 11.43L3.07 10.03L2.58 8.85L0.80 8.64L0.80 6.36L2.58 6.15L3.07 4.97L1.95 3.57L3.57 1.95L4.97 3.07Z" fill="#e2e7ef" stroke="#56628a" stroke-width="1.15" stroke-linejoin="round" stroke-dasharray="2.2 0.45"/><circle cx="7.5" cy="7.5" r="1.7" fill="#fff" stroke="#4a567c" stroke-width="1.15"/></svg>
<div class="cell" style="left:127.5px;top:535.91px;width:55.5px;height:22.67px"></div>
<svg class="ic" style="left:111px;top:540.41px" width="14" height="14" viewBox="0 0 14 14"><rect x="0.5" y="0.5" width="13" height="13" fill="#08a4ea" stroke="#151515" stroke-width="1.2"/><rect x="1" y="5" width="12" height="1" fill="#1a1a1a"/><rect x="1" y="6" width="12" height="2" fill="#fff200"/><rect x="1" y="8" width="12" height="1" fill="#1a1a1a"/></svg>
<div class="cell" style="left:183px;top:535.91px;width:153.5px;height:22.67px"></div>
<div class="t" style="left:132px;top:540.51px;letter-spacing:-0.45px">733</div>
<div class="t" style="left:187.5px;top:540.51px">Branching - And [0]</div>
<div class="tri" style="left:304.5px;top:545.41px;border-width:4px 3.5px 0 3.5px;border-color:#111 transparent transparent transparent"></div>
<svg class="ic" style="left:318px;top:540.21px" width="15" height="15" viewBox="0 0 15 15"><path d="M6.15 2.58L6.36 0.80L8.64 0.80L8.85 2.58L10.03 3.07L11.43 1.95L13.05 3.57L11.93 4.97L12.42 6.15L14.20 6.36L14.20 8.64L12.42 8.85L11.93 10.03L13.05 11.43L11.43 13.05L10.03 11.93L8.85 12.42L8.64 14.20L6.36 14.20L6.15 12.42L4.97 11.93L3.57 13.05L1.95 11.43L3.07 10.03L2.58 8.85L0.80 8.64L0.80 6.36L2.58 6.15L3.07 4.97L1.95 3.57L3.57 1.95L4.97 3.07Z" fill="#e2e7ef" stroke="#56628a" stroke-width="1.15" stroke-linejoin="round" stroke-dasharray="2.2 0.45"/><circle cx="7.5" cy="7.5" r="1.7" fill="#fff" stroke="#4a567c" stroke-width="1.15"/></svg>
<div class="cell" style="left:127.5px;top:558.57px;width:55.5px;height:22.67px"></div>
<svg class="ic" style="left:111px;top:563.07px" width="14" height="14" viewBox="0 0 14 14"><rect x="0.5" y="0.5" width="13" height="13" fill="#08a4ea" stroke="#151515" stroke-width="1.2"/><rect x="1" y="5" width="12" height="1" fill="#1a1a1a"/><rect x="1" y="6" width="12" height="2" fill="#fff200"/><rect x="1" y="8" width="12" height="1" fill="#1a1a1a"/></svg>
<div class="cell" style="left:183px;top:558.57px;width:153.5px;height:22.67px"></div>
<div class="t" style="left:132px;top:563.17px;letter-spacing:-0.45px">730</div>
<div class="t" style="left:187.5px;top:563.17px">Branching - And [0]</div>
<div class="tri" style="left:304.5px;top:568.07px;border-width:4px 3.5px 0 3.5px;border-color:#111 transparent transparent transparent"></div>
<svg class="ic" style="left:318px;top:562.87px" width="15" height="15" viewBox="0 0 15 15"><path d="M6.15 2.58L6.36 0.80L8.64 0.80L8.85 2.58L10.03 3.07L11.43 1.95L13.05 3.57L11.93 4.97L12.42 6.15L14.20 6.36L14.20 8.64L12.42 8.85L11.93 10.03L13.05 11.43L11.43 13.05L10.03 11.93L8.85 12.42L8.64 14.20L6.36 14.20L6.15 12.42L4.97 11.93L3.57 13.05L1.95 11.43L3.07 10.03L2.58 8.85L0.80 8.64L0.80 6.36L2.58 6.15L3.07 4.97L1.95 3.57L3.57 1.95L4.97 3.07Z" fill="#e2e7ef" stroke="#56628a" stroke-width="1.15" stroke-linejoin="round" stroke-dasharray="2.2 0.45"/><circle cx="7.5" cy="7.5" r="1.7" fill="#fff" stroke="#4a567c" stroke-width="1.15"/></svg>
<div class="cell gc" style="left:110px;top:580.24px;width:73px;height:23.67px"></div>
<div class="tri" style="left:79px;top:592.24px;border-width:4px 3.4px 0 3.4px;border-color:#80808e transparent transparent transparent"></div>
<svg class="ic" style="left:92.6px;top:586.74px" width="16" height="11" viewBox="0 0 16 11"><path d="M0.6 0.7H15.4L14.8 4.6H10.9L9.2 9.5H4.4Z" fill="#08a4ea" stroke="#111" stroke-width="1.25" stroke-linejoin="round"/><path d="M2.9 4.9H10.3L9.6 7H3.8Z" fill="#fff200"/><path d="M2.4 4.6H14M3.7 7.2H9.8" stroke="#111" stroke-width="0.7" fill="none"/></svg>
<div class="cell" style="left:183px;top:581.24px;width:153.5px;height:22.67px"></div>
<div class="t" style="left:114.5px;top:585.84px;letter-spacing:-0.45px">720</div>
<div class="t" style="left:187.5px;top:585.84px">Branching</div>
<div class="tri" style="left:304.5px;top:590.74px;border-width:4px 3.5px 0 3.5px;border-color:#111 transparent transparent transparent"></div>
<svg class="ic" style="left:318px;top:585.54px" width="15" height="15" viewBox="0 0 15 15"><path d="M6.15 2.58L6.36 0.80L8.64 0.80L8.85 2.58L10.03 3.07L11.43 1.95L13.05 3.57L11.93 4.97L12.42 6.15L14.20 6.36L14.20 8.64L12.42 8.85L11.93 10.03L13.05 11.43L11.43 13.05L10.03 11.93L8.85 12.42L8.64 14.20L6.36 14.20L6.15 12.42L4.97 11.93L3.57 13.05L1.95 11.43L3.07 10.03L2.58 8.85L0.80 8.64L0.80 6.36L2.58 6.15L3.07 4.97L1.95 3.57L3.57 1.95L4.97 3.07Z" fill="#e2e7ef" stroke="#56628a" stroke-width="1.15" stroke-linejoin="round" stroke-dasharray="2.2 0.45"/><circle cx="7.5" cy="7.5" r="1.7" fill="#fff" stroke="#4a567c" stroke-width="1.15"/></svg>
<div class="cell" style="left:127.5px;top:603.91px;width:55.5px;height:22.67px"></div>
<svg class="ic" style="left:111px;top:608.41px" width="14" height="14" viewBox="0 0 14 14"><rect x="0.5" y="0.5" width="13" height="13" fill="#08a4ea" stroke="#151515" stroke-width="1.2"/><rect x="1" y="5" width="12" height="1" fill="#1a1a1a"/><rect x="1" y="6" width="12" height="2" fill="#fff200"/><rect x="1" y="8" width="12" height="1" fill="#1a1a1a"/></svg>
<div class="cell" style="left:183px;top:603.91px;width:153.5px;height:22.67px"></div>
<div class="t" style="left:132px;top:608.51px;letter-spacing:-0.45px">726</div>
<div class="t" style="left:187.5px;top:608.51px">Branching - And [0]</div>
<div class="tri" style="left:304.5px;top:613.41px;border-width:4px 3.5px 0 3.5px;border-color:#111 transparent transparent transparent"></div>
<svg class="ic" style="left:318px;top:608.21px" width="15" height="15" viewBox="0 0 15 15"><path d="M6.15 2.58L6.36 0.80L8.64 0.80L8.85 2.58L10.03 3.07L11.43 1.95L13.05 3.57L11.93 4.97L12.42 6.15L14.20 6.36L14.20 8.64L12.42 8.85L11.93 10.03L13.05 11.43L11.43 13.05L10.03 11.93L8.85 12.42L8.64 14.20L6.36 14.20L6.15 12.42L4.97 11.93L3.57 13.05L1.95 11.43L3.07 10.03L2.58 8.85L0.80 8.64L0.80 6.36L2.58 6.15L3.07 4.97L1.95 3.57L3.57 1.95L4.97 3.07Z" fill="#e2e7ef" stroke="#56628a" stroke-width="1.15" stroke-linejoin="round" stroke-dasharray="2.2 0.45"/><circle cx="7.5" cy="7.5" r="1.7" fill="#fff" stroke="#4a567c" stroke-width="1.15"/></svg>
<div class="cell" style="left:127.5px;top:626.58px;width:55.5px;height:22.67px"></div>
<svg class="ic" style="left:111px;top:631.08px" width="14" height="14" viewBox="0 0 14 14"><rect x="0.5" y="0.5" width="13" height="13" fill="#08a4ea" stroke="#151515" stroke-width="1.2"/><rect x="1" y="5" width="12" height="1" fill="#1a1a1a"/><rect x="1" y="6" width="12" height="2" fill="#fff200"/><rect x="1" y="8" width="12" height="1" fill="#1a1a1a"/></svg>
<div class="cell" style="left:183px;top:626.58px;width:153.5px;height:22.67px"></div>
<div class="t" style="left:132px;top:631.18px;letter-spacing:-0.45px">723</div>
<div class="t" style="left:187.5px;top:631.18px">Branching - And [0]</div>
<div class="tri" style="left:304.5px;top:636.08px;border-width:4px 3.5px 0 3.5px;border-color:#111 transparent transparent transparent"></div>
<svg class="ic" style="left:318px;top:630.88px" width="15" height="15" viewBox="0 0 15 15"><path d="M6.15 2.58L6.36 0.80L8.64 0.80L8.85 2.58L10.03 3.07L11.43 1.95L13.05 3.57L11.93 4.97L12.42 6.15L14.20 6.36L14.20 8.64L12.42 8.85L11.93 10.03L13.05 11.43L11.43 13.05L10.03 11.93L8.85 12.42L8.64 14.20L6.36 14.20L6.15 12.42L4.97 11.93L3.57 13.05L1.95 11.43L3.07 10.03L2.58 8.85L0.80 8.64L0.80 6.36L2.58 6.15L3.07 4.97L1.95 3.57L3.57 1.95L4.97 3.07Z" fill="#e2e7ef" stroke="#56628a" stroke-width="1.15" stroke-linejoin="round" stroke-dasharray="2.2 0.45"/><circle cx="7.5" cy="7.5" r="1.7" fill="#fff" stroke="#4a567c" stroke-width="1.15"/></svg>
<div class="cell" style="left:127.5px;top:649.24px;width:55.5px;height:22.67px"></div>
<svg class="ic" style="left:111px;top:653.74px" width="14" height="14" viewBox="0 0 14 14"><rect x="0.5" y="0.5" width="13" height="13" fill="#08a4ea" stroke="#151515" stroke-width="1.2"/><rect x="1" y="5" width="12" height="1" fill="#1a1a1a"/><rect x="1" y="6" width="12" height="2" fill="#fff200"/><rect x="1" y="8" width="12" height="1" fill="#1a1a1a"/></svg>
<div class="cell" style="left:183px;top:649.24px;width:153.5px;height:22.67px"></div>
<div class="t" style="left:132px;top:653.84px;letter-spacing:-0.45px">720</div>
<div class="t" style="left:187.5px;top:653.84px">Branching - And [0]</div>
<div class="tri" style="left:304.5px;top:658.74px;border-width:4px 3.5px 0 3.5px;border-color:#111 transparent transparent transparent"></div>
<svg class="ic" style="left:318px;top:653.54px" width="15" height="15" viewBox="0 0 15 15"><path d="M6.15 2.58L6.36 0.80L8.64 0.80L8.85 2.58L10.03 3.07L11.43 1.95L13.05 3.57L11.93 4.97L12.42 6.15L14.20 6.36L14.20 8.64L12.42 8.85L11.93 10.03L13.05 11.43L11.43 13.05L10.03 11.93L8.85 12.42L8.64 14.20L6.36 14.20L6.15 12.42L4.97 11.93L3.57 13.05L1.95 11.43L3.07 10.03L2.58 8.85L0.80 8.64L0.80 6.36L2.58 6.15L3.07 4.97L1.95 3.57L3.57 1.95L4.97 3.07Z" fill="#e2e7ef" stroke="#56628a" stroke-width="1.15" stroke-linejoin="round" stroke-dasharray="2.2 0.45"/><circle cx="7.5" cy="7.5" r="1.7" fill="#fff" stroke="#4a567c" stroke-width="1.15"/></svg>
<div class="cell gc" style="left:110px;top:670.91px;width:73px;height:23.67px"></div>
<div class="tri" style="left:79px;top:682.91px;border-width:4px 3.4px 0 3.4px;border-color:#80808e transparent transparent transparent"></div>
<svg class="ic" style="left:92.6px;top:677.41px" width="16" height="11" viewBox="0 0 16 11"><path d="M0.6 0.7H15.4L14.8 4.6H10.9L9.2 9.5H4.4Z" fill="#08a4ea" stroke="#111" stroke-width="1.25" stroke-linejoin="round"/><path d="M2.9 4.9H10.3L9.6 7H3.8Z" fill="#fff200"/><path d="M2.4 4.6H14M3.7 7.2H9.8" stroke="#111" stroke-width="0.7" fill="none"/></svg>
<div class="cell" style="left:183px;top:671.91px;width:153.5px;height:22.67px"></div>
<div class="t" style="left:114.5px;top:676.51px;letter-spacing:-0.45px">710</div>
<div class="t" style="left:187.5px;top:676.51px">Branching</div>
<div class="tri" style="left:304.5px;top:681.41px;border-width:4px 3.5px 0 3.5px;border-color:#111 transparent transparent transparent"></div>
<svg class="ic" style="left:318px;top:676.21px" width="15" height="15" viewBox="0 0 15 15"><path d="M6.15 2.58L6.36 0.80L8.64 0.80L8.85 2.58L10.03 3.07L11.43 1.95L13.05 3.57L11.93 4.97L12.42 6.15L14.20 6.36L14.20 8.64L12.42 8.85L11.93 10.03L13.05 11.43L11.43 13.05L10.03 11.93L8.85 12.42L8.64 14.20L6.36 14.20L6.15 12.42L4.97 11.93L3.57 13.05L1.95 11.43L3.07 10.03L2.58 8.85L0.80 8.64L0.80 6.36L2.58 6.15L3.07 4.97L1.95 3.57L3.57 1.95L4.97 3.07Z" fill="#e2e7ef" stroke="#56628a" stroke-width="1.15" stroke-linejoin="round" stroke-dasharray="2.2 0.45"/><circle cx="7.5" cy="7.5" r="1.7" fill="#fff" stroke="#4a567c" stroke-width="1.15"/></svg>
<div style="position:absolute;left:2px;top:690px;width:353px;height:1px;background:#a3a6b6"></div><div style="position:absolute;left:0;top:691px;width:360px;height:2px;background:#fff"></div>
</div>
<div class="sbtn" style="left:308px;top:2px;width:21px;height:21.5px"></div>
<div class="sbtn" style="left:333.3px;top:2px;width:21.4px;height:21.5px"></div>
<svg class="ic" style="left:310.6px;top:6.8px" width="16" height="12" viewBox="0 0 16 12"><defs><linearGradient id="fo1" x1="0" y1="0" x2="0" y2="1"><stop offset="0" stop-color="#fde3a0"/><stop offset="1" stop-color="#f2a531"/></linearGradient></defs><path d="M0.6 1.8C0.6 1 1 0.6 1.8 0.6H4.6L6 2.2H11.2C11.9 2.2 12.3 2.6 12.3 3.3V4.6H4.2L1.4 11.2H0.6Z" fill="#f3bb55" stroke="#d68f22" stroke-width="0.9" stroke-linejoin="round"/><path d="M4.1 4.8H15.3L12.4 11.4H1.1Z" fill="url(#fo1)" stroke="#dc982a" stroke-width="0.9" stroke-linejoin="round"/></svg>
<svg class="ic" style="left:336.9px;top:5.6px" width="14" height="14.5" viewBox="0 0 14 14.5"><defs><linearGradient id="sv1" x1="0" y1="0" x2="0" y2="1"><stop offset="0" stop-color="#ffffff"/><stop offset="0.45" stop-color="#d8e8f8"/><stop offset="1" stop-color="#4f95dc"/></linearGradient></defs><rect x="0.4" y="0.4" width="13.2" height="13.7" rx="0.8" fill="#363c4c"/><path d="M1.6 1V13.4M12.4 1V13.4" stroke="#6f7686" stroke-width="0.6"/><rect x="3" y="0.9" width="8.2" height="6" fill="#f6f7fa"/><rect x="8.2" y="2" width="1.9" height="3.2" fill="#2a2f3c"/><rect x="3" y="8" width="8.2" height="5.8" fill="url(#sv1)"/></svg>
<div class="tbar" style="left:365px;top:2px;width:85.5px;height:29px"></div>
<svg class="ic" style="left:374px;top:11px" width="16" height="12" viewBox="0 0 16 12"><path d="M0.8 6C3 2.2 5.6 1 8 1S13 2.2 15.2 6C13 9.8 10.4 11 8 11S3 9.8 0.8 6Z" fill="#e9edf2" stroke="#6e7686" stroke-width="1"/><path d="M1.5 4.6C3.5 1.8 5.8 0.9 8 0.9S12.5 1.8 14.5 4.6" fill="none" stroke="#c98a3c" stroke-width="1.1"/><circle cx="8" cy="6.2" r="3.3" fill="#7389ad"/><circle cx="8" cy="6.2" r="1.4" fill="#1c2438"/><circle cx="7" cy="5.2" r="0.9" fill="#dfe6f2"/></svg>
<div class="t" style="left:393.6px;top:9.6px;font-size:12px;letter-spacing:-0.5px;color:#2b2648">Labels</div>
<div class="tri" style="left:438.8px;top:15.5px;border-width:3.2px 3px 0 3px;border-color:#222 transparent transparent transparent"></div>
<div class="tbar" style="left:454.5px;top:2px;width:475.5px;height:29px"></div>
<div class="tbar ovf" style="left:933.5px;top:2px;width:14.5px;height:29px"></div>
<div class="tri" style="left:937px;top:16px;border-width:3.5px 3.3px 0 3.3px;border-color:#6e7482 transparent transparent transparent"></div>
<div class="tchk" style="left:456.5px;top:5px;width:23px;height:23.5px"></div>
<svg class="ic" style="left:460.5px;top:9.5px" width="16" height="15" viewBox="0 0 16 15"><rect x="1" y="1" width="14" height="13" fill="#dde0e8" stroke="#333" stroke-width="1" stroke-dasharray="1.4 1.1"/></svg>
<div class="tsep" style="left:483.5px"></div>
<div class="tsep" style="left:567.5px"></div>
<div class="tsep" style="left:600.5px"></div>
<div class="tsep" style="left:633.3px"></div>
<div class="tsep" style="left:665.5px"></div>
<div class="tsep" style="left:706.5px"></div>
<div class="tsep" style="left:765.0px"></div>
<div class="tsep" style="left:798.5px"></div>
<div class="tsep" style="left:830.0px"></div>
<svg class="ic" style="left:492.5px;top:9px" width="16" height="16" viewBox="0 0 16 16"><path d="M8 0.5L11 4H9.2V6.8H12V5L15.5 8L12 11V9.2H9.2V12H11L8 15.5L5 12H6.8V9.2H4V11L0.5 8L4 5V6.8H6.8V4H5Z" fill="#111"/></svg>
<svg class="ic" style="left:517.5px;top:8.5px" width="18" height="17" viewBox="0 0 18 17"><ellipse cx="8.2" cy="8.5" rx="3.2" ry="7.2" fill="none" stroke="#555" stroke-width="1"/><path d="M16.5 9.5C16 12 12 13.2 8 12.8S1 10.5 1.3 8.3S5 4.7 9 4.9" fill="none" stroke="#555" stroke-width="1"/><path d="M8.2 2.6L12.2 5L8.4 7Z" fill="#555"/><circle cx="8.3" cy="3.4" r="0.9" fill="#555"/><circle cx="13" cy="8.6" r="0.9" fill="#555"/><circle cx="10.6" cy="10.6" r="0.9" fill="#555"/></svg>
<svg class="ic" style="left:543px;top:9px" width="17" height="17" viewBox="0 0 17 17"><path d="M9.5 9.5L15.3 15.3" stroke="#e0a030" stroke-width="3" stroke-linecap="round"/><circle cx="6.3" cy="6.3" r="5" fill="#e8f2fb" stroke="#7a8494" stroke-width="1.3"/><path d="M3.4 5.6A3.2 3.2 0 0 1 6 3.2" stroke="#fff" stroke-width="1.2" fill="none"/></svg>
<svg class="ic" style="left:577px;top:9px" width="16" height="16" viewBox="0 0 16 16"><rect x="0.5" y="0.5" width="15" height="15" fill="#cfe2f7" stroke="#6f9ad0"/><path d="M2.2 2.2H6L4.8 3.4L6.8 5.4L5.4 6.8L3.4 4.8L2.2 6Z M13.8 2.2V6L12.6 4.8L10.6 6.8L9.2 5.4L11.2 3.4L10 2.2Z M2.2 13.8V10L3.4 11.2L5.4 9.2L6.8 10.6L4.8 12.6L6 13.8Z M13.8 13.8H10L11.2 12.6L9.2 10.6L10.6 9.2L12.6 11.2L13.8 10Z" fill="#1f3f78"/></svg>
<svg class="ic" style="left:610.5px;top:10px" width="14" height="14" viewBox="0 0 14 14"><path d="M4.3 0.5V13.5M9.7 0.5V13.5M0.5 4.3H13.5M0.5 9.7H13.5" stroke="#111" stroke-width="1.25" fill="none"/></svg>
<svg class="ic" style="left:642px;top:12px" width="15" height="10" viewBox="0 0 15 10"><rect x="0.5" y="0.5" width="14" height="9" rx="1" fill="#f2a73a" stroke="#d07d12"/><path d="M3 9V6M5.2 9V4.5M7.5 9V6M9.8 9V4.5M12 9V6" stroke="#fbe2b0" stroke-width="1"/></svg>
<svg class="ic" style="left:674px;top:9.5px" width="16" height="15" viewBox="0 0 16 15"><rect x="0.5" y="0.5" width="15" height="14" fill="#e6ecf8" stroke="#7d8fc4"/><rect x="2" y="2" width="12" height="9.6" fill="#9bc7ea"/><path d="M2 11.6V8.5L5.5 6L9 9L11 7.6L14 10V11.6Z" fill="#6aa33c"/><circle cx="9" cy="5.6" r="2.3" fill="#e8a33a"/></svg>
<div class="tri" style="left:692.5px;top:15.5px;border-width:3.2px 3px 0 3px;border-color:#222 transparent transparent transparent"></div>
<svg class="ic" style="left:715.5px;top:9.5px" width="16.5" height="15.6" viewBox="0 0 18 17"><path d="M4.5 0.8H13.5L9.5 5.5H14L3.2 15.2L6.3 8.2H1.2Z" fill="#fbd648" stroke="#e3a820" stroke-width="0.8" stroke-linejoin="round"/><circle cx="13" cy="12.2" r="3.8" fill="#ee7a2a" stroke="#d05a12" stroke-width="0.7"/><rect x="10.8" y="11.5" width="4.4" height="1.5" fill="#fff"/></svg>
<svg class="ic" style="left:741.5px;top:9.5px" width="16.5" height="15.6" viewBox="0 0 18 17"><path d="M4.5 0.8H13.5L9.5 5.5H14L3.2 15.2L6.3 8.2H1.2Z" fill="#bdbdbd" stroke="#a6a6a6" stroke-width="0.8" stroke-linejoin="round"/><circle cx="13" cy="12.2" r="3.8" fill="#9d9d9d" stroke="#8a8a8a" stroke-width="0.7"/><circle cx="13" cy="12.2" r="1.6" fill="#c8c8c8"/></svg>
<svg class="ic" style="left:774px;top:9.3px" width="16" height="15" viewBox="0 0 16 15"><path d="M6.3 14.5V10.2C6.3 8.6 3.1 8.2 3.1 5.6V4.7H0.9L4.3 0.7L7.7 4.7H5.6V5.5C5.6 6.9 8 6.9 8 8.2C8 6.9 10.4 6.9 10.4 5.5V4.7H8.3L11.7 0.7L15.1 4.7H12.9V5.6C12.9 8.2 9.7 8.6 9.7 10.2V14.5Z" fill="#5fbe4c" stroke="#2c8a2a" stroke-width="0.9" stroke-linejoin="round"/></svg>
<svg class="ic" style="left:807px;top:9.8px" width="14.6" height="14" viewBox="0 0 16 16"><path d="M3 0.8L8 5.4L13 0.8L15.2 3L10.6 8L15.2 13L13 15.2L8 10.6L3 15.2L0.8 13L5.4 8L0.8 3Z" fill="#e23a44" stroke="#bb2530" stroke-width="0.9" stroke-linejoin="round"/></svg>
<svg class="ic" style="left:839.5px;top:10px" width="15" height="15" viewBox="0 0 15 15"><circle cx="7.5" cy="7.5" r="6.7" fill="#ea5a5a" stroke="#d03434" stroke-width="1"/><circle cx="7.5" cy="7.5" r="5" fill="#f07070" opacity="0.6"/><rect x="3.6" y="6.2" width="7.8" height="2.6" rx="0.5" fill="#fff"/></svg>
<div class="t b" style="left:867.5px;top:9.5px;font-size:15.5px;color:#0808d8;letter-spacing:0">V</div>
<div id="vframe"></div>
<svg id="view" width="1200" height="693" viewBox="0 0 1200 693">
<defs>
<clipPath id="vc"><rect x="367.3" y="36.3" width="577.4" height="619.4"/></clipPath>
<linearGradient id="sky" x1="0" y1="0" x2="0" y2="1"><stop offset="0" stop-color="#edf0f8"/><stop offset="0.22" stop-color="#f5f7fb"/><stop offset="0.46" stop-color="#ffffff"/><stop offset="1" stop-color="#ffffff"/></linearGradient>
<linearGradient id="lblg" x1="0" y1="0" x2="0" y2="1"><stop offset="0" stop-color="#ffffff" stop-opacity="0.92"/><stop offset="0.5" stop-color="#f0f4f8" stop-opacity="0.84"/><stop offset="1" stop-color="#d3dde6" stop-opacity="0.72"/></linearGradient>
<radialGradient id="sung" cx="0.5" cy="0.42" r="0.62"><stop offset="0" stop-color="#ffe24a"/><stop offset="0.45" stop-color="#ffd522"/><stop offset="1" stop-color="#ffc106"/></radialGradient>
<linearGradient id="zc" x1="0" y1="0" x2="1" y2="0"><stop offset="0" stop-color="#3d70bd"/><stop offset="0.45" stop-color="#6f9fe0"/><stop offset="1" stop-color="#3a68ae"/></linearGradient>
<linearGradient id="bc" x1="0" y1="0" x2="1" y2="0"><stop offset="0" stop-color="#3a3a3a"/><stop offset="0.5" stop-color="#707070"/><stop offset="1" stop-color="#3e3e3e"/></linearGradient>
<linearGradient id="yc" x1="0" y1="0" x2="0" y2="1"><stop offset="0" stop-color="#5a9a1a"/><stop offset="0.4" stop-color="#86c832"/><stop offset="1" stop-color="#4f8a14"/></linearGradient>
<linearGradient id="cl" x1="0" y1="0" x2="1" y2="0"><stop offset="0" stop-color="#e6e6e6"/><stop offset="1" stop-color="#c9c9c9"/></linearGradient>
</defs>
<g clip-path="url(#vc)">
<rect x="367" y="36" width="579" height="620" fill="#fff"/>
<rect x="367" y="36" width="579" height="171" fill="url(#sky)"/>
<polygon points="367,522.7 415.6,538.5 415.6,546.2 367,531.4" fill="#f1f1f1"/>
<polygon points="415.6,538.5 484,566 486.5,573.2 415.6,546.2" fill="#d3d3d3"/>
<polygon points="367,198.3 380,194 467,164.5 565,138 619,129.5 650,124.5 690,119.5 750,118 835,117.5 945,135 945,564.5 825,593.8 767.5,611.3 700,636 675,647.5 657,656 573,656 568.5,651 552,631.3 540.5,618.3 486.5,573.2 484,566 367,522.7" fill="#999999"/>
<polyline points="945,565.6 825,594.9 767.5,612.4 700,637.1 675,648.6 657,657.1" fill="none" stroke="#7f7f7f" stroke-width="3"/>
<polygon points="486.5,573.2 498,569.5 549,613 560,632 580,656 573,656 568.5,651 552,631.3 540.5,618.3" fill="#a6a6a6"/>
<polygon points="590,321.8 810,328.8 794.5,431.8 575,424.5" fill="#999900"/>
<polyline points="810,328.8 794.5,431.8 575,424.5" fill="none" stroke="#d2d200" stroke-width="0.8"/>
<line x1="366" y1="213" x2="605" y2="219.5" stroke="#505050" stroke-width="0.55" opacity="0.9"/>
<line x1="605" y1="219.5" x2="650" y2="221" stroke="#505050" stroke-width="0.55" opacity="0.9"/>
<line x1="650" y1="221" x2="945" y2="231" stroke="#505050" stroke-width="0.55" opacity="0.9"/>
<line x1="366" y1="314.5" x2="590" y2="321.8" stroke="#505050" stroke-width="0.55" opacity="0.9"/>
<line x1="810" y1="328.8" x2="945" y2="333.8" stroke="#505050" stroke-width="0.55" opacity="0.9"/>
<line x1="366" y1="417.3" x2="575" y2="424.5" stroke="#505050" stroke-width="0.55" opacity="0.9"/>
<line x1="794.5" y1="431.8" x2="945" y2="436" stroke="#505050" stroke-width="0.55" opacity="0.9"/>
<line x1="366" y1="518.3" x2="660" y2="527.5" stroke="#505050" stroke-width="0.55" opacity="0.9"/>
<line x1="660" y1="527.5" x2="945" y2="538.8" stroke="#505050" stroke-width="0.55" opacity="0.9"/>
<line x1="619" y1="129.5" x2="608.8" y2="200" stroke="#505050" stroke-width="0.55" opacity="0.9"/>
<line x1="608.8" y1="200" x2="590" y2="321.8" stroke="#505050" stroke-width="0.55" opacity="0.9"/>
<line x1="575" y1="424.5" x2="563.8" y2="500" stroke="#505050" stroke-width="0.55" opacity="0.9"/>
<line x1="563.8" y1="500" x2="545" y2="617.5" stroke="#505050" stroke-width="0.55" opacity="0.9"/>
<line x1="841" y1="118.8" x2="828.8" y2="200" stroke="#505050" stroke-width="0.55" opacity="0.9"/>
<line x1="828.8" y1="200" x2="810" y2="328.8" stroke="#505050" stroke-width="0.55" opacity="0.9"/>
<line x1="794.5" y1="431.8" x2="783.8" y2="500" stroke="#505050" stroke-width="0.55" opacity="0.9"/>
<line x1="783.8" y1="500" x2="767.5" y2="611.3" stroke="#505050" stroke-width="0.55" opacity="0.9"/>
<line x1="492" y1="571.5" x2="574" y2="654" stroke="#8a8a8a" stroke-width="0.6"/>
<line x1="720.5" y1="190" x2="708.5" y2="266" stroke="#3e7aa7" stroke-width="4.6"/><line x1="720.15" y1="189.95" x2="708.15" y2="265.95" stroke="#5190bf" stroke-width="3.50"/><line x1="719.81" y1="189.89" x2="707.81" y2="265.89" stroke="#79b5dd" stroke-width="1.52"/>
<line x1="705" y1="286" x2="693.5" y2="368" stroke="#3e7aa7" stroke-width="4.6"/><line x1="704.65" y1="285.95" x2="693.15" y2="367.95" stroke="#5190bf" stroke-width="3.50"/><line x1="704.31" y1="285.90" x2="692.81" y2="367.90" stroke="#79b5dd" stroke-width="1.52"/>
<line x1="691" y1="389" x2="677.5" y2="471" stroke="#3e7aa7" stroke-width="4.6"/><line x1="690.65" y1="388.94" x2="677.15" y2="470.94" stroke="#5190bf" stroke-width="3.50"/><line x1="690.31" y1="388.89" x2="676.81" y2="470.89" stroke="#79b5dd" stroke-width="1.52"/>
<line x1="674" y1="491" x2="663.5" y2="566" stroke="#3e7aa7" stroke-width="4.6"/><line x1="673.65" y1="490.95" x2="663.15" y2="565.95" stroke="#5190bf" stroke-width="3.50"/><line x1="673.31" y1="490.90" x2="662.81" y2="565.90" stroke="#79b5dd" stroke-width="1.52"/>
<line x1="935" y1="202" x2="927" y2="273" stroke="#3e7aa7" stroke-width="4.6"/><line x1="934.65" y1="201.96" x2="926.65" y2="272.96" stroke="#5190bf" stroke-width="3.50"/><line x1="934.30" y1="201.92" x2="926.30" y2="272.92" stroke="#79b5dd" stroke-width="1.52"/>
<line x1="925" y1="293" x2="912.5" y2="377" stroke="#3e7aa7" stroke-width="4.6"/><line x1="924.65" y1="292.95" x2="912.15" y2="376.95" stroke="#5190bf" stroke-width="3.50"/><line x1="924.31" y1="292.90" x2="911.81" y2="376.90" stroke="#79b5dd" stroke-width="1.52"/>
<line x1="909" y1="396" x2="896" y2="478" stroke="#3e7aa7" stroke-width="4.6"/><line x1="908.65" y1="395.95" x2="895.65" y2="477.95" stroke="#5190bf" stroke-width="3.50"/><line x1="908.31" y1="395.89" x2="895.31" y2="477.89" stroke="#79b5dd" stroke-width="1.52"/>
<line x1="657" y1="586" x2="616" y2="642" stroke="#3e7aa7" stroke-width="4.6"/><line x1="656.72" y1="585.79" x2="615.72" y2="641.79" stroke="#5190bf" stroke-width="3.50"/><line x1="656.44" y1="585.59" x2="615.44" y2="641.59" stroke="#79b5dd" stroke-width="1.52"/>
<line x1="520" y1="204" x2="492.5" y2="259" stroke="#3e7aa7" stroke-width="4.6"/><line x1="519.69" y1="203.84" x2="492.19" y2="258.84" stroke="#5190bf" stroke-width="3.50"/><line x1="519.37" y1="203.69" x2="491.87" y2="258.69" stroke="#79b5dd" stroke-width="1.52"/>
<line x1="487.5" y1="279" x2="473.5" y2="361" stroke="#3e7aa7" stroke-width="4.6"/><line x1="487.15" y1="278.94" x2="473.15" y2="360.94" stroke="#5190bf" stroke-width="3.50"/><line x1="486.81" y1="278.88" x2="472.81" y2="360.88" stroke="#79b5dd" stroke-width="1.52"/>
<line x1="471" y1="381" x2="460" y2="463" stroke="#3e7aa7" stroke-width="4.6"/><line x1="470.65" y1="380.95" x2="459.65" y2="462.95" stroke="#5190bf" stroke-width="3.50"/><line x1="470.31" y1="380.91" x2="459.31" y2="462.91" stroke="#79b5dd" stroke-width="1.52"/>
<line x1="890" y1="498" x2="855" y2="547" stroke="#3e7aa7" stroke-width="4.6"/><line x1="889.72" y1="497.80" x2="854.72" y2="546.80" stroke="#5190bf" stroke-width="3.50"/><line x1="889.43" y1="497.59" x2="854.43" y2="546.59" stroke="#79b5dd" stroke-width="1.52"/>
<ellipse cx="720.5" cy="190.5" rx="6.2" ry="4.6" transform="rotate(0 720.5 190.5)" fill="#4a8ab9"/>
<ellipse cx="709.0" cy="267.2" rx="6.2" ry="4.6" transform="rotate(0 709.0 267.2)" fill="#4a8ab9"/>
<ellipse cx="705" cy="286.5" rx="6.2" ry="4.6" transform="rotate(0 705 286.5)" fill="#4a8ab9"/>
<ellipse cx="694.0" cy="369.2" rx="6.2" ry="4.6" transform="rotate(0 694.0 369.2)" fill="#4a8ab9"/>
<ellipse cx="691" cy="389.5" rx="6.2" ry="4.6" transform="rotate(0 691 389.5)" fill="#4a8ab9"/>
<ellipse cx="678.0" cy="472.2" rx="6.2" ry="4.6" transform="rotate(0 678.0 472.2)" fill="#4a8ab9"/>
<ellipse cx="674" cy="491.5" rx="6.2" ry="4.6" transform="rotate(0 674 491.5)" fill="#4a8ab9"/>
<ellipse cx="664.0" cy="567.2" rx="6.2" ry="4.6" transform="rotate(0 664.0 567.2)" fill="#4a8ab9"/>
<ellipse cx="935" cy="202.5" rx="6.2" ry="4.6" transform="rotate(0 935 202.5)" fill="#4a8ab9"/>
<ellipse cx="927.5" cy="274.2" rx="6.2" ry="4.6" transform="rotate(0 927.5 274.2)" fill="#4a8ab9"/>
<ellipse cx="925" cy="293.5" rx="6.2" ry="4.6" transform="rotate(0 925 293.5)" fill="#4a8ab9"/>
<ellipse cx="913.0" cy="378.2" rx="6.2" ry="4.6" transform="rotate(0 913.0 378.2)" fill="#4a8ab9"/>
<ellipse cx="909" cy="396.5" rx="6.2" ry="4.6" transform="rotate(0 909 396.5)" fill="#4a8ab9"/>
<ellipse cx="896.5" cy="479.2" rx="6.2" ry="4.6" transform="rotate(0 896.5 479.2)" fill="#4a8ab9"/>
<ellipse cx="520" cy="204.5" rx="6.2" ry="4.6" transform="rotate(0 520 204.5)" fill="#4a8ab9"/>
<ellipse cx="493.0" cy="260.2" rx="6.2" ry="4.6" transform="rotate(0 493.0 260.2)" fill="#4a8ab9"/>
<ellipse cx="487.5" cy="279.5" rx="6.2" ry="4.6" transform="rotate(0 487.5 279.5)" fill="#4a8ab9"/>
<ellipse cx="474.0" cy="362.2" rx="6.2" ry="4.6" transform="rotate(0 474.0 362.2)" fill="#4a8ab9"/>
<ellipse cx="471" cy="381.5" rx="6.2" ry="4.6" transform="rotate(0 471 381.5)" fill="#4a8ab9"/>
<ellipse cx="460.5" cy="464.2" rx="6.2" ry="4.6" transform="rotate(0 460.5 464.2)" fill="#4a8ab9"/>
<ellipse cx="890" cy="499" rx="6" ry="4.5" transform="rotate(0 890 499)" fill="#4a8ab9"/>
<ellipse cx="657.5" cy="586" rx="6" ry="4.5" transform="rotate(0 657.5 586)" fill="#4a8ab9"/>
<ellipse cx="511" cy="549.5" rx="6.8" ry="6" transform="rotate(35 511 549.5)" fill="#4a8ab9"/>
<ellipse cx="618" cy="639" rx="5.5" ry="8" transform="rotate(35 618 639)" fill="#6db7e8"/>
<ellipse cx="852" cy="552" rx="5" ry="7" transform="rotate(0 852 552)" fill="#4a8ab9"/>
<line x1="461" y1="484" x2="510" y2="548" stroke="#62b2e4" stroke-width="5.0"/><line x1="461.28" y1="483.79" x2="510.28" y2="547.79" stroke="#84d0fa" stroke-width="3.90"/><line x1="461.56" y1="483.57" x2="510.56" y2="547.57" stroke="#a2e3ff" stroke-width="1.65"/>
<line x1="366" y1="247.2" x2="519" y2="198.6" stroke="#62b2e4" stroke-width="3.0"/><line x1="365.89" y1="246.87" x2="518.89" y2="198.27" stroke="#84d0fa" stroke-width="1.90"/><line x1="365.79" y1="246.53" x2="518.79" y2="197.93" stroke="#a2e3ff" stroke-width="0.99"/>
<line x1="366" y1="250.6" x2="519" y2="202" stroke="#62b2e4" stroke-width="3.0"/><line x1="365.89" y1="250.27" x2="518.89" y2="201.67" stroke="#84d0fa" stroke-width="1.90"/><line x1="365.79" y1="249.93" x2="518.79" y2="201.33" stroke="#a2e3ff" stroke-width="0.99"/>
<line x1="542" y1="196.5" x2="706" y2="181.5" stroke="#62b2e4" stroke-width="5.0"/><line x1="541.97" y1="196.15" x2="705.97" y2="181.15" stroke="#84d0fa" stroke-width="3.90"/><line x1="541.94" y1="195.80" x2="705.94" y2="180.80" stroke="#a2e3ff" stroke-width="1.65"/>
<line x1="738" y1="181" x2="918" y2="194" stroke="#62b2e4" stroke-width="5.0"/><line x1="738.03" y1="180.65" x2="918.03" y2="193.65" stroke="#84d0fa" stroke-width="3.90"/><line x1="738.05" y1="180.30" x2="918.05" y2="193.30" stroke="#a2e3ff" stroke-width="1.65"/>
<line x1="366" y1="276" x2="470" y2="271" stroke="#62b2e4" stroke-width="5.0"/><line x1="365.98" y1="275.65" x2="469.98" y2="270.65" stroke="#84d0fa" stroke-width="3.90"/><line x1="365.97" y1="275.30" x2="469.97" y2="270.30" stroke="#a2e3ff" stroke-width="1.65"/>
<line x1="506" y1="271.5" x2="690" y2="277" stroke="#62b2e4" stroke-width="5.0"/><line x1="506.01" y1="271.15" x2="690.01" y2="276.65" stroke="#84d0fa" stroke-width="3.90"/><line x1="506.02" y1="270.80" x2="690.02" y2="276.30" stroke="#a2e3ff" stroke-width="1.65"/>
<line x1="725" y1="278.5" x2="907" y2="284.5" stroke="#62b2e4" stroke-width="5.0"/><line x1="725.01" y1="278.15" x2="907.01" y2="284.15" stroke="#84d0fa" stroke-width="3.90"/><line x1="725.02" y1="277.80" x2="907.02" y2="283.80" stroke="#a2e3ff" stroke-width="1.65"/>
<line x1="366" y1="369" x2="455" y2="371.5" stroke="#62b2e4" stroke-width="5.0"/><line x1="366.01" y1="368.65" x2="455.01" y2="371.15" stroke="#84d0fa" stroke-width="3.90"/><line x1="366.02" y1="368.30" x2="455.02" y2="370.80" stroke="#a2e3ff" stroke-width="1.65"/>
<line x1="490" y1="373" x2="674" y2="379" stroke="#62b2e4" stroke-width="5.0"/><line x1="490.01" y1="372.65" x2="674.01" y2="378.65" stroke="#84d0fa" stroke-width="3.90"/><line x1="490.02" y1="372.30" x2="674.02" y2="378.30" stroke="#a2e3ff" stroke-width="1.65"/>
<line x1="710" y1="379.5" x2="892" y2="386" stroke="#62b2e4" stroke-width="5.0"/><line x1="710.01" y1="379.15" x2="892.01" y2="385.65" stroke="#84d0fa" stroke-width="3.90"/><line x1="710.02" y1="378.80" x2="892.02" y2="385.30" stroke="#a2e3ff" stroke-width="1.65"/>
<line x1="929" y1="386" x2="945" y2="386.5" stroke="#62b2e4" stroke-width="5.0"/><line x1="929.01" y1="385.65" x2="945.01" y2="386.15" stroke="#84d0fa" stroke-width="3.90"/><line x1="929.02" y1="385.30" x2="945.02" y2="385.80" stroke="#a2e3ff" stroke-width="1.65"/>
<line x1="366" y1="469" x2="440" y2="474" stroke="#62b2e4" stroke-width="5.0"/><line x1="366.02" y1="468.65" x2="440.02" y2="473.65" stroke="#84d0fa" stroke-width="3.90"/><line x1="366.05" y1="468.30" x2="440.05" y2="473.30" stroke="#a2e3ff" stroke-width="1.65"/>
<line x1="475" y1="475" x2="660" y2="481.5" stroke="#62b2e4" stroke-width="5.0"/><line x1="475.01" y1="474.65" x2="660.01" y2="481.15" stroke="#84d0fa" stroke-width="3.90"/><line x1="475.02" y1="474.30" x2="660.02" y2="480.80" stroke="#a2e3ff" stroke-width="1.65"/>
<line x1="694" y1="482.5" x2="878" y2="490" stroke="#62b2e4" stroke-width="5.0"/><line x1="694.01" y1="482.15" x2="878.01" y2="489.65" stroke="#84d0fa" stroke-width="3.90"/><line x1="694.03" y1="481.80" x2="878.03" y2="489.30" stroke="#a2e3ff" stroke-width="1.65"/>
<line x1="913" y1="488.5" x2="945" y2="484" stroke="#62b2e4" stroke-width="5.0"/><line x1="912.95" y1="488.15" x2="944.95" y2="483.65" stroke="#84d0fa" stroke-width="3.90"/><line x1="912.90" y1="487.81" x2="944.90" y2="483.31" stroke="#a2e3ff" stroke-width="1.65"/>
<line x1="944" y1="284" x2="945" y2="284" stroke="#62b2e4" stroke-width="5.0"/><line x1="944.00" y1="283.65" x2="945.00" y2="283.65" stroke="#84d0fa" stroke-width="3.90"/><line x1="944.00" y1="283.30" x2="945.00" y2="283.30" stroke="#a2e3ff" stroke-width="1.65"/>
<line x1="533" y1="560" x2="649" y2="574" stroke="#62b2e4" stroke-width="5.0"/><line x1="533.04" y1="559.65" x2="649.04" y2="573.65" stroke="#84d0fa" stroke-width="3.90"/><line x1="533.08" y1="559.31" x2="649.08" y2="573.31" stroke="#a2e3ff" stroke-width="1.65"/>
<line x1="681" y1="574.5" x2="833" y2="559.5" stroke="#62b2e4" stroke-width="5.0"/><line x1="680.97" y1="574.15" x2="832.97" y2="559.15" stroke="#84d0fa" stroke-width="3.90"/><line x1="680.93" y1="573.80" x2="832.93" y2="558.80" stroke="#a2e3ff" stroke-width="1.65"/>
<line x1="862" y1="553.8" x2="946" y2="523.6" stroke="#62b2e4" stroke-width="3.0"/><line x1="861.88" y1="553.47" x2="945.88" y2="523.27" stroke="#84d0fa" stroke-width="1.90"/><line x1="861.76" y1="553.14" x2="945.76" y2="522.94" stroke="#a2e3ff" stroke-width="0.99"/>
<line x1="862" y1="557.2" x2="946" y2="527.2" stroke="#62b2e4" stroke-width="3.0"/><line x1="861.88" y1="556.87" x2="945.88" y2="526.87" stroke="#84d0fa" stroke-width="1.90"/><line x1="861.76" y1="556.54" x2="945.76" y2="526.54" stroke="#a2e3ff" stroke-width="0.99"/>
<polygon points="521.7,198.5 542.6,203.1 541.4,189.9" fill="#6ab8e8"/><polygon points="521.7,198.5 542.5,201.2 541.5,191.8" fill="#8edcff"/><polygon points="521.7,198.5 542.1,197.3 541.7,193.7" fill="#b0f0ff" opacity="0.85"/>
<polygon points="526.5,195.0 504.0,195.2 508.0,207.8" fill="#4e96cc"/><polygon points="526.5,195.0 504.6,197.0 507.4,206.0" fill="#6cb4e6"/><polygon points="526.5,195.0 505.8,200.7 506.8,204.1" fill="#98d6f8" opacity="0.85"/>
<polygon points="732.0,179.9 705.6,174.9 706.4,188.1" fill="#4e96cc"/><polygon points="732.0,179.9 705.7,176.8 706.3,186.2" fill="#6cb4e6"/><polygon points="732.0,179.9 706.0,180.7 706.2,184.3" fill="#98d6f8" opacity="0.85"/>
<polygon points="945.0,196.4 918.6,187.4 917.4,200.6" fill="#4e96cc"/><polygon points="945.0,196.4 918.4,189.3 917.6,198.7" fill="#6cb4e6"/><polygon points="945.0,196.4 918.1,193.2 917.8,196.8" fill="#98d6f8" opacity="0.85"/>
<polygon points="490.5,270.0 469.7,264.4 470.3,277.6" fill="#4e96cc"/><polygon points="490.5,270.0 469.8,266.3 470.2,275.7" fill="#6cb4e6"/><polygon points="490.5,270.0 470.0,270.2 470.1,273.8" fill="#98d6f8" opacity="0.85"/>
<polygon points="485.8,270.5 505.7,278.1 506.3,264.9" fill="#6ab8e8"/><polygon points="485.8,270.5 505.8,276.2 506.2,266.8" fill="#8edcff"/><polygon points="485.8,270.5 506.0,272.3 506.1,268.7" fill="#b0f0ff" opacity="0.85"/>
<polygon points="709.5,278.0 689.8,270.4 689.2,283.6" fill="#4e96cc"/><polygon points="709.5,278.0 689.7,272.3 689.3,281.7" fill="#6cb4e6"/><polygon points="709.5,278.0 689.5,276.2 689.4,279.8" fill="#98d6f8" opacity="0.85"/>
<polygon points="704.5,277.5 724.7,285.1 725.3,271.9" fill="#6ab8e8"/><polygon points="704.5,277.5 724.8,283.2 725.2,273.8" fill="#8edcff"/><polygon points="704.5,277.5 725.0,279.3 725.1,275.7" fill="#b0f0ff" opacity="0.85"/>
<polygon points="928.0,285.5 907.8,277.9 907.2,291.1" fill="#4e96cc"/><polygon points="928.0,285.5 907.7,279.8 907.3,289.2" fill="#6cb4e6"/><polygon points="928.0,285.5 907.5,283.7 907.4,287.3" fill="#98d6f8" opacity="0.85"/>
<polygon points="923.8,283.7 943.8,290.9 944.2,277.7" fill="#6ab8e8"/><polygon points="923.8,283.7 943.9,289.0 944.1,279.6" fill="#8edcff"/><polygon points="923.8,283.7 944.0,285.1 944.1,281.5" fill="#b0f0ff" opacity="0.85"/>
<polygon points="474.5,372.5 455.3,364.9 454.7,378.1" fill="#4e96cc"/><polygon points="474.5,372.5 455.2,366.8 454.8,376.2" fill="#6cb4e6"/><polygon points="474.5,372.5 455.0,370.7 454.9,374.3" fill="#98d6f8" opacity="0.85"/>
<polygon points="469.5,372.0 490.2,379.6 490.8,366.4" fill="#6ab8e8"/><polygon points="469.5,372.0 490.3,377.7 490.7,368.3" fill="#8edcff"/><polygon points="469.5,372.0 490.5,373.8 490.6,370.2" fill="#b0f0ff" opacity="0.85"/>
<polygon points="692.3,380.1 674.2,372.4 673.4,385.6" fill="#4e96cc"/><polygon points="692.3,380.1 674.1,374.3 673.5,383.7" fill="#6cb4e6"/><polygon points="692.3,380.1 673.8,378.2 673.6,381.8" fill="#98d6f8" opacity="0.85"/>
<polygon points="690.0,379.0 709.7,386.6 710.3,373.4" fill="#6ab8e8"/><polygon points="690.0,379.0 709.8,384.7 710.2,375.3" fill="#8edcff"/><polygon points="690.0,379.0 710.0,380.8 710.1,377.2" fill="#b0f0ff" opacity="0.85"/>
<polygon points="912.5,387.0 892.8,379.4 892.2,392.6" fill="#4e96cc"/><polygon points="912.5,387.0 892.7,381.3 892.3,390.7" fill="#6cb4e6"/><polygon points="912.5,387.0 892.5,385.2 892.4,388.8" fill="#98d6f8" opacity="0.85"/>
<polygon points="907.5,385.8 928.7,392.8 928.9,379.6" fill="#6ab8e8"/><polygon points="907.5,385.8 928.7,391.0 928.9,381.4" fill="#8edcff"/><polygon points="907.5,385.8 928.8,387.0 928.8,383.4" fill="#b0f0ff" opacity="0.85"/>
<polygon points="460.5,475.0 440.3,467.4 439.7,480.6" fill="#4e96cc"/><polygon points="460.5,475.0 440.2,469.3 439.8,478.7" fill="#6cb4e6"/><polygon points="460.5,475.0 440.0,473.2 439.9,476.8" fill="#98d6f8" opacity="0.85"/>
<polygon points="455.0,474.7 475.3,481.9 475.7,468.7" fill="#6ab8e8"/><polygon points="455.0,474.7 475.4,480.1 475.6,470.5" fill="#8edcff"/><polygon points="455.0,474.7 475.5,476.1 475.6,472.5" fill="#b0f0ff" opacity="0.85"/>
<polygon points="678.8,482.5 659.9,474.9 659.1,488.1" fill="#4e96cc"/><polygon points="678.8,482.5 659.8,476.8 659.2,486.2" fill="#6cb4e6"/><polygon points="678.8,482.5 659.5,480.7 659.4,484.3" fill="#98d6f8" opacity="0.85"/>
<polygon points="673.8,481.8 694.2,489.4 694.8,476.2" fill="#6ab8e8"/><polygon points="673.8,481.8 694.3,487.5 694.7,478.1" fill="#8edcff"/><polygon points="673.8,481.8 694.5,483.6 694.6,480.0" fill="#b0f0ff" opacity="0.85"/>
<polygon points="897.5,491.0 878.3,483.4 877.7,496.6" fill="#4e96cc"/><polygon points="897.5,491.0 878.2,485.3 877.8,494.7" fill="#6cb4e6"/><polygon points="897.5,491.0 878.0,489.2 877.9,492.8" fill="#98d6f8" opacity="0.85"/>
<polygon points="892.5,490.4 914.4,495.1 913.2,481.9" fill="#6ab8e8"/><polygon points="892.5,490.4 914.2,493.2 913.4,483.8" fill="#8edcff"/><polygon points="892.5,490.4 913.9,489.3 913.6,485.7" fill="#b0f0ff" opacity="0.85"/>
<polygon points="516.0,558.0 533.0,566.8 534.6,553.6" fill="#6ab8e8"/><polygon points="516.0,558.0 533.2,564.9 534.4,555.5" fill="#8edcff"/><polygon points="516.0,558.0 533.7,561.0 534.1,557.4" fill="#b0f0ff" opacity="0.85"/>
<polygon points="665.0,576.5 681.8,581.0 680.2,568.0" fill="#6ab8e8"/><polygon points="665.0,576.5 681.6,579.2 680.4,569.8" fill="#8edcff"/><polygon points="665.0,576.5 681.1,575.3 680.7,571.7" fill="#b0f0ff" opacity="0.85"/>
<polygon points="850.0,558.0 831.9,553.0 833.1,566.2" fill="#4e96cc"/><polygon points="850.0,558.0 832.1,554.9 832.9,564.3" fill="#6cb4e6"/><polygon points="850.0,558.0 832.4,558.8 832.8,562.4" fill="#98d6f8" opacity="0.85"/>
<rect x="517.5" y="186.0" width="13.700000000000045" height="17.0" fill="url(#lblg)" stroke="#2e2e2e" stroke-width="1"/><text x="524.4" y="198.4" text-anchor="middle" class="lbl">84</text>
<rect x="722.5" y="169.0" width="14.600000000000023" height="17.30000000000001" fill="url(#lblg)" stroke="#2e2e2e" stroke-width="1"/><text x="729.8" y="181.6" text-anchor="middle" class="lbl">78</text>
<rect x="934.7" y="182.7" width="14.799999999999955" height="17.100000000000023" fill="url(#lblg)" stroke="#2e2e2e" stroke-width="1"/><text x="942.1" y="195.2" text-anchor="middle" class="lbl">74</text>
<rect x="481.0" y="260.0" width="14.300000000000011" height="17.0" fill="url(#lblg)" stroke="#2e2e2e" stroke-width="1"/><text x="488.1" y="272.4" text-anchor="middle" class="lbl">79</text>
<rect x="700.0" y="267.5" width="14.0" height="17.5" fill="url(#lblg)" stroke="#2e2e2e" stroke-width="1"/><text x="707.0" y="280.1" text-anchor="middle" class="lbl">70</text>
<rect x="918.5" y="274.3" width="14.799999999999955" height="17.19999999999999" fill="url(#lblg)" stroke="#2e2e2e" stroke-width="1"/><text x="925.9" y="286.8" text-anchor="middle" class="lbl">64</text>
<rect x="464.8" y="362.2" width="14.399999999999977" height="17.30000000000001" fill="url(#lblg)" stroke="#2e2e2e" stroke-width="1"/><text x="472.0" y="374.8" text-anchor="middle" class="lbl">66</text>
<rect x="683.3" y="369" width="15.700000000000045" height="18" fill="#fff" stroke="#000" stroke-width="2"/><text x="691.1" y="381.9" text-anchor="middle" class="lbl">57</text>
<rect x="903.0" y="377.5" width="14.0" height="17" fill="url(#lblg)" stroke="#2e2e2e" stroke-width="1"/><text x="910.0" y="389.9" text-anchor="middle" class="lbl">50</text>
<rect x="451.0" y="463.5" width="13.5" height="18" fill="url(#lblg)" stroke="#2e2e2e" stroke-width="1"/><text x="457.8" y="476.4" text-anchor="middle" class="lbl">51</text>
<rect x="669.3" y="471.5" width="14.0" height="18" fill="url(#lblg)" stroke="#2e2e2e" stroke-width="1"/><text x="676.3" y="484.4" text-anchor="middle" class="lbl">46</text>
<rect x="888.0" y="479.3" width="14.0" height="17.19999999999999" fill="url(#lblg)" stroke="#2e2e2e" stroke-width="1"/><text x="895.0" y="491.8" text-anchor="middle" class="lbl">19</text>
<rect x="484.3" y="553.0" width="13.5" height="17.299999999999955" fill="url(#lblg)" stroke="#2e2e2e" stroke-width="1"/><text x="491.1" y="565.5" text-anchor="middle" class="lbl">24</text>
<rect x="649.3" y="566.8" width="14.700000000000045" height="17.200000000000045" fill="url(#lblg)" stroke="#2e2e2e" stroke-width="1"/><text x="656.6" y="579.3" text-anchor="middle" class="lbl">17</text>
<rect x="853.5" y="546.0" width="8.5" height="17.299999999999955" fill="url(#lblg)" stroke="#2e2e2e" stroke-width="1"/><text x="857.8" y="558.5" text-anchor="middle" class="lbl">8</text>
<rect x="624.3" y="631.8" width="9.0" height="17.700000000000045" fill="url(#lblg)" stroke="#2e2e2e" stroke-width="1"/><text x="628.8" y="644.5" text-anchor="middle" class="lbl">7</text>
<rect x="479.6" y="620" width="44.0" height="5.3" fill="#ffffff" opacity="0.82"/>
<rect x="479.6" y="625.3" width="44.0" height="5.2" fill="#5e5e5e" opacity="0.82"/>
<rect x="523.6" y="620" width="44.0" height="5.3" fill="#5e5e5e" opacity="0.82"/>
<rect x="523.6" y="625.3" width="44.0" height="5.2" fill="#ffffff" opacity="0.82"/>
<rect x="567.5" y="620" width="44.0" height="5.3" fill="#ffffff" opacity="0.82"/>
<rect x="567.5" y="625.3" width="44.0" height="5.2" fill="#5e5e5e" opacity="0.82"/>
<rect x="611.5" y="620" width="44.0" height="5.3" fill="#5e5e5e" opacity="0.82"/>
<rect x="611.5" y="625.3" width="44.0" height="5.2" fill="#ffffff" opacity="0.82"/>
<rect x="655.4" y="620" width="44.0" height="5.3" fill="#ffffff" opacity="0.82"/>
<rect x="655.4" y="625.3" width="44.0" height="5.2" fill="#5e5e5e" opacity="0.82"/>
<rect x="699.4" y="620" width="44.0" height="5.3" fill="#5e5e5e" opacity="0.82"/>
<rect x="699.4" y="625.3" width="44.0" height="5.2" fill="#ffffff" opacity="0.82"/>
<rect x="743.3" y="620" width="44.0" height="5.3" fill="#ffffff" opacity="0.82"/>
<rect x="743.3" y="625.3" width="44.0" height="5.2" fill="#5e5e5e" opacity="0.82"/>
<rect x="787.2" y="620" width="44.0" height="5.3" fill="#5e5e5e" opacity="0.82"/>
<rect x="787.2" y="625.3" width="44.0" height="5.2" fill="#ffffff" opacity="0.82"/>
<path d="M479.6 619.9H831.2M479.6 630.6H831.2" stroke="#000" stroke-width="1.3" fill="none"/>
<text x="480.4" y="618" text-anchor="middle" class="sc" fill="#000">0</text>
<text x="524.4" y="618" text-anchor="middle" class="sc" fill="#000">20</text>
<text x="568.3" y="618" text-anchor="middle" class="sc" fill="#7a7a7a">40</text>
<text x="612.2" y="618" text-anchor="middle" class="sc" fill="#7a7a7a">60</text>
<text x="656.2" y="618" text-anchor="middle" class="sc" fill="#7a7a7a">80</text>
<text x="700.1" y="618" text-anchor="middle" class="sc" fill="#7a7a7a">100</text>
<text x="744.1" y="618" text-anchor="middle" class="sc" fill="#7a7a7a">120</text>
<text x="788.0" y="618" text-anchor="middle" class="sc" fill="#000">140</text>
<text x="832.0" y="618" text-anchor="middle" class="sc" fill="#000">160</text>
<rect x="558" y="646.6" width="388" height="9" fill="#fff" opacity="0.55"/>
<text x="372.5" y="653" class="tiny">1000 fps | 1.000 ms/f</text>
<text x="944" y="653" text-anchor="end" class="tiny">NVIDIA Corporation NVIDIA GeForce RTX 2070/PCIe/SSE2 | OpenGL v4.6.0 NVIDIA 471.68</text>
<g id="compass"><ellipse cx="880.7" cy="72.7" rx="6.6" ry="6.8" fill="#e93f0c"/><ellipse cx="878.5" cy="75" rx="3.6" ry="4" fill="#f24d10" opacity=".7"/><polygon points="888.2,57.6 901.8,57.6 895.4,73" fill="url(#zc)"/><ellipse cx="895" cy="57.3" rx="7.1" ry="2.7" fill="#1f3152"/><polygon points="909,83.2 925.5,73.4 926.5,87" fill="#6e6e6e"/><ellipse cx="926" cy="80.2" rx="2.5" ry="6.9" fill="#505050"/><polygon points="895,101.5 888.3,116.2 902.2,116.2" fill="url(#bc)"/><ellipse cx="895.2" cy="116.3" rx="7" ry="1.9" fill="#5a5a5a"/><polygon points="866,86.6 866.5,100.4 882.5,90.2" fill="url(#yc)"/><ellipse cx="865.6" cy="93.5" rx="3.2" ry="7" fill="#3f7010"/><polygon points="881.4,75.3 900.2,70 909.7,79.8 890.5,83.7" fill="#a2a2a2"/><polygon points="881.4,75.3 890.5,83.7 890.5,102.5 881.8,93.4" fill="url(#cl)"/><polygon points="890.5,83.7 909.7,79.8 909.3,94.5 890.5,102.5" fill="#8c8c8c"/><polygon points="901.5,93 908,94 905,100" fill="#6a6a6a"/><ellipse cx="909.8" cy="100" rx="6.3" ry="6.2" fill="#262626"/><text x="895" y="55.8" text-anchor="middle" class="ax">Z</text><text x="859.3" y="98.6" text-anchor="middle" class="ax">Y</text></g>
<g id="sun"><polygon points="967.4,45.3 956.5,47.6 964.8,55.1 953.8,53.0 958.6,63.1 949.2,57.0 949.7,68.2 943.5,58.9 939.7,69.4 937.4,58.5 929.9,66.8 932.0,55.8 921.9,60.6 928.0,51.2 916.8,51.7 926.1,45.5 915.6,41.7 926.5,39.4 918.2,31.9 929.2,34.0 924.4,23.9 933.8,30.0 933.3,18.8 939.5,28.1 943.3,17.6 945.6,28.5 953.1,20.2 951.0,31.2 961.1,26.4 955.0,35.8 966.2,35.3 956.9,41.5" fill="#ffd92e" stroke="#fff3a0" stroke-width="0.5"/><circle cx="941.5" cy="43.5" r="16.5" fill="url(#sung)"/></g>
<path d="M718.8,398.8 L718.8,415 L722.6,411.6 L725.4,417.8 L727.8,416.7 L725,410.6 L730.2,410.4 Z" fill="#fff" stroke="#000" stroke-width="1" stroke-linejoin="round"/>
</g>
</svg>
<div id="status"><div class="t">(2510.1, 1063.3, 776.0) Reserves/M1/P1/P102/770/57/773/1 <b>Level_Blast_Name:</b> 57</div></div>
<div class="gbtn"></div>
<svg class="ic" style="left:915px;top:667px" width="28" height="17" viewBox="0 0 28 17"><circle cx="7.5" cy="7.5" r="6.6" fill="#6fb3e6" stroke="#7d8a9a" stroke-width="0.9"/><path d="M3.5 3.2C5 2 7.5 2.6 7 4.6S4.4 7.6 5.4 9.6S3 9.4 1.6 7.6Z M9.6 2C11.4 3 12.6 4.4 11.6 6.4S9 7 9 5Z M8 9.6C10 8.8 12 9.6 11.6 11.4S8.6 13.2 8 11.6Z" fill="#63b04a"/><path d="M2.6 4A6 6 0 0 1 8 1.4" stroke="#fff" stroke-width="1" fill="none" opacity=".7"/><ellipse cx="12.5" cy="12.6" rx="4.6" ry="3" fill="#f2f4f8" stroke="#3e4a66" stroke-width="0.9"/><circle cx="12.5" cy="12.6" r="1.7" fill="#26304a"/><path d="M20 6.5H26L23 10Z" fill="#7c8292"/></svg>
<div id="rbg"></div>
<div id="rp">
<div class="rptitle"></div>
<div class="t b" style="left:4.8px;top:4px;color:#9a9fae;font-size:11.5px;letter-spacing:0">Reserves Legend</div>
<svg class="ic" style="left:208px;top:6px" width="9" height="10" viewBox="0 0 9 10"><path d="M2 0.5H7V5.5H8.5V6.5H0.5V5.5H2Z" fill="#b0b3bd"/><rect x="2.8" y="1" width="1.4" height="4.5" fill="#d6d8de"/><rect x="4" y="6.5" width="1" height="3" fill="#b0b3bd"/></svg>
<div class="combo"></div>
<div class="t b" style="left:9.3px;top:29.4px;font-size:12px;letter-spacing:-0.3px;color:#7c7c7c">Reserves Shading: <span style="color:#ff4a0a">&lt;Dependenc...</span></div>
<div class="tri" style="left:208px;top:34.5px;border-width:4px 3.5px 0 3.5px;border-color:#111 transparent transparent transparent"></div>
<div class="lbox" style="left:5px;top:55px;width:213px;height:419px"><div class="linner"></div></div>
<div class="lrow sel" style="left:9px;top:59px;width:206px;height:20.6px"></div>
<div class="lrow" style="left:9px;top:79.6px;width:206px;height:20.6px"></div>
<div class="sw" style="left:11px;top:60.3px;width:29.3px;height:17px;background:#808080;border-color:#8a8a8a"></div>
<div class="sw" style="left:11px;top:81px;width:29.3px;height:17px;background:#fff;border-color:#aaa"></div>
<div class="vl" style="left:43.5px;top:59.5px;height:41px;background:#d9d9e0"></div>
<div class="t" style="left:47px;top:62.3px;letter-spacing:-0.25px">Excluded from AutoDependencies</div>
<div class="t" style="left:47px;top:82.8px;letter-spacing:-0.25px">Included in AutoDependencies</div>
<div class="dots" style="left:105px;top:470.5px"></div>
<div class="lbox" style="left:5px;top:480px;width:213px;height:196.5px"></div>
<div class="t" style="left:7px;top:483.5px">Dependency Arrows</div>
<div class="linner2"></div>
<div class="lrow" style="left:9px;top:499.3px;width:206px;height:20.3px"></div>
<div class="sw" style="left:11.5px;top:501.3px;width:28.5px;height:15.8px;background:#ff0000;border-color:#ff0000"></div>
<div class="t" style="left:47px;top:502.7px;letter-spacing:-0.3px">Manual - AND</div>
<div class="lrow" style="left:9px;top:519.6px;width:206px;height:20.3px"></div>
<div class="sw" style="left:11.5px;top:521.6px;width:28.5px;height:15.8px;background:#0000ff;border-color:#0000ff"></div>
<div class="t" style="left:47px;top:523.0px;letter-spacing:-0.3px">Manual - OR</div>
<div class="lrow" style="left:9px;top:539.9px;width:206px;height:20.3px"></div>
<div class="sw" style="left:11.5px;top:541.9px;width:28.5px;height:15.8px;background:#ffb6c1;border-color:#ffb6c1"></div>
<div class="t" style="left:47px;top:543.3px;letter-spacing:-0.3px">Auto - AND</div>
<div class="lrow sel" style="left:9px;top:560.2px;width:206px;height:20.3px"></div>
<div class="sw" style="left:11.5px;top:562.2px;width:28.5px;height:15.8px;background:#87cefa;border-color:#87cefa"></div>
<div class="t" style="left:47px;top:563.6px;letter-spacing:-0.3px">Auto - OR</div>
<div class="vl" style="left:43.5px;top:499.3px;height:81.2px;background:#d9d9e0"></div>
</div>
<div class="redbox" style="left:957.5px;top:562.5px;width:212.5px;height:24.3px"></div>
<div class="stab" style="top:8px;height:36px"><span>Data</span></div>
<div class="stab" style="top:49.5px;height:86px"><span>Dumps Legend</span></div>
<div class="stab" style="top:143px;height:46px"><span>Layers</span></div>
<div id="pop">
<div class="pophd"></div>
<div class="t" style="left:3.8px;top:3px;font-size:11px">Auto Rule Type</div>
<div class="tri" style="left:199.5px;top:8.8px;border-width:3.5px 3.2px 0 3.2px;border-color:#111 transparent transparent transparent"></div>
<div class="t" style="left:3.8px;top:22.20px">Previous</div>
<div class="t" style="left:3.8px;top:36.82px">None</div>
<div class="t" style="left:3.8px;top:51.44px">Branching Strict</div>
<div class="hl" style="left:1px;top:65.56px;width:208px;height:14px"></div>
<div class="t" style="left:3.8px;top:66.06px">Branching - Or</div>
<div class="t" style="left:3.8px;top:80.68px">Blasts Strict</div>
<div class="t" style="left:3.8px;top:95.30px">Blasts - And</div>
<div class="t" style="left:3.8px;top:109.92px">Bearing Strict - 0°</div>
<div class="t" style="left:3.8px;top:124.54px">Bearing - 0°</div>
<div class="popft"></div>
<div class="t" style="left:8.3px;top:170.2px;font-weight:bold;font-size:15px;color:#15152a;letter-spacing:0">x</div>
<svg class="ic" style="left:198.5px;top:177px" width="12" height="12" viewBox="0 0 12 12"><path d="M11 2L2 11M11 5.5L5.5 11M11 9L9 11" stroke="#8e8e9a" stroke-width="1" fill="none"/></svg>
</div>
<div class="redbox" style="left:184px;top:256.3px;width:212.6px;height:21.2px"></div>
</body></html>
